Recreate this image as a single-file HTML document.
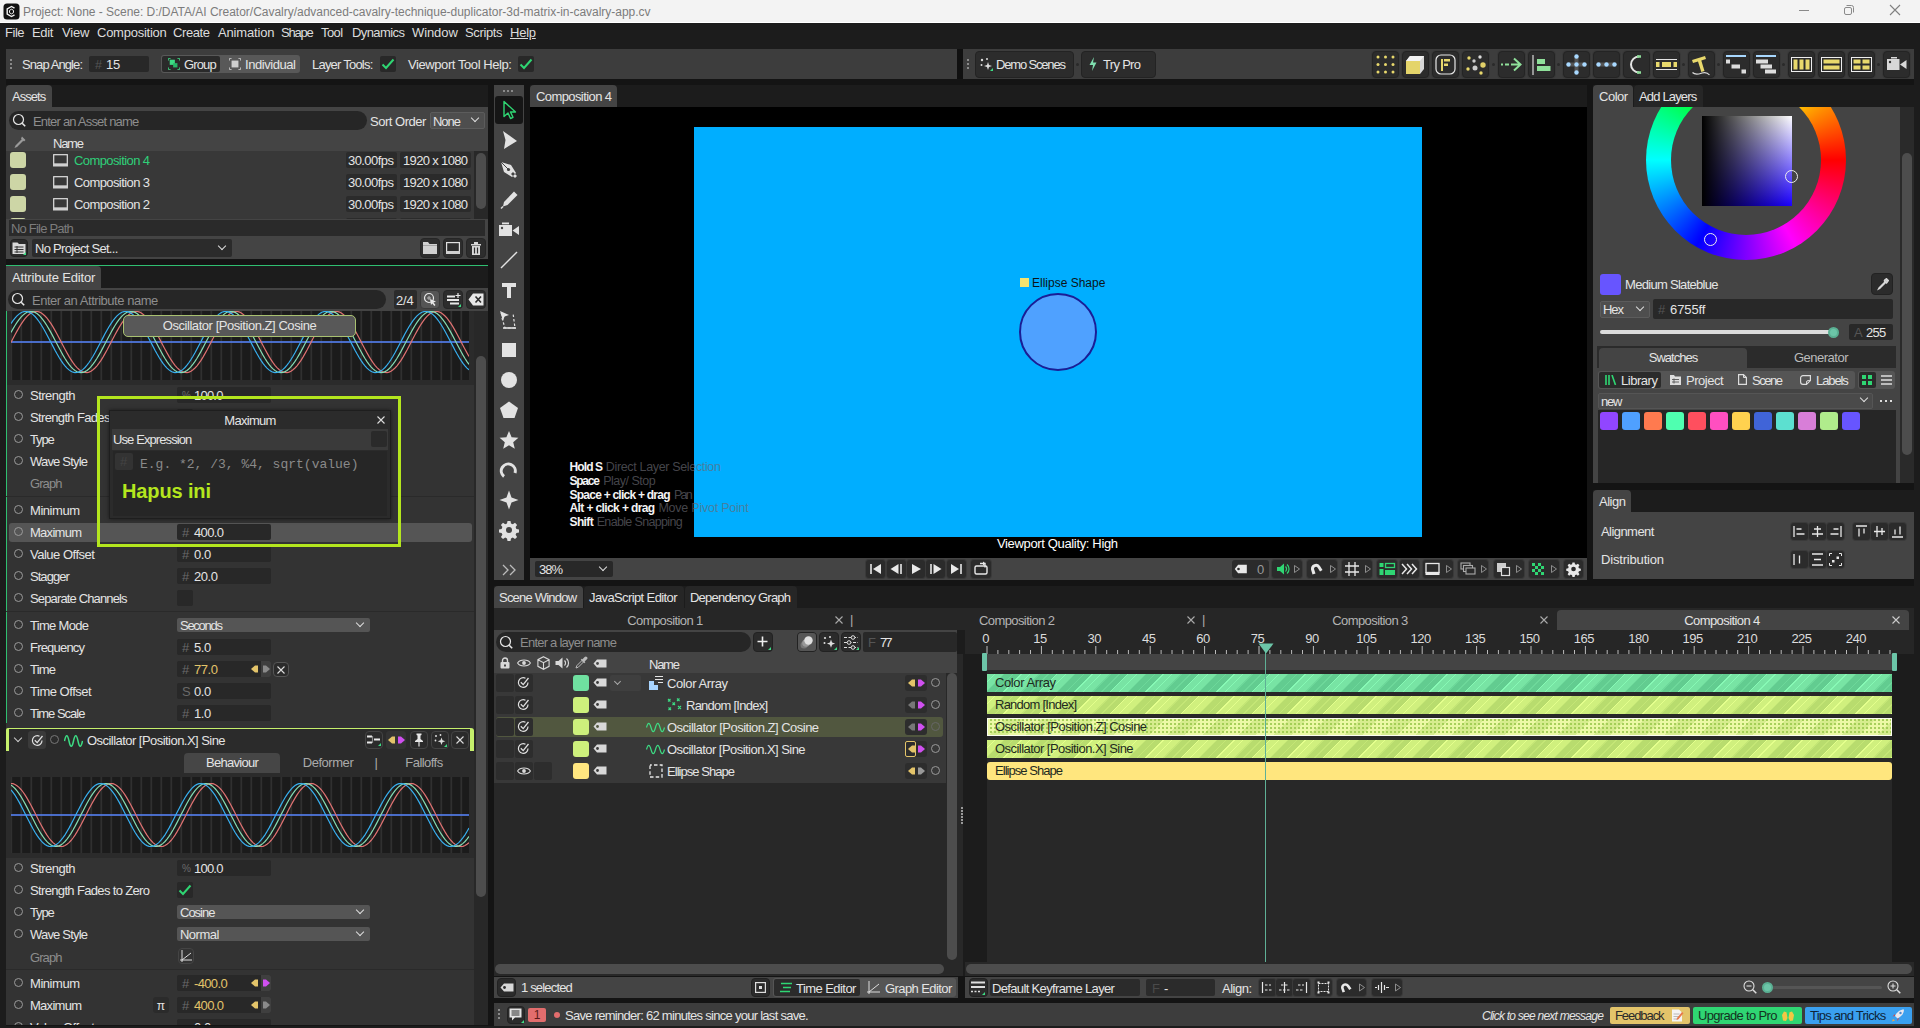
<!DOCTYPE html>
<html lang="en"><head><meta charset="utf-8"><title>Cavalry</title>
<style>
*{box-sizing:border-box}
html,body{margin:0;padding:0}
body{width:1920px;height:1028px;background:#1c1c1c;font-family:"Liberation Sans",sans-serif;font-size:12.5px;letter-spacing:-0.25px;color:#e4e4e4;overflow:hidden;position:relative}
.a{position:absolute}
.t{position:absolute;white-space:nowrap;line-height:18px;height:16px}
.dim{color:#8d8d8d}
.pn{position:absolute;background:#444}
.tab{position:absolute;height:22px;line-height:24px;background:#444;border-radius:4px 4px 0 0;padding:0 6px;white-space:nowrap}
.tab.off{background:#262626}
.inp{position:absolute;background:#282828;border-radius:2px}
.btn{position:absolute;background:#2c2c2c;border-radius:4px;border:1px solid #262626}
.ib{position:absolute;width:27px;height:27px;top:51px;background:#2c2c2c;border-radius:4px;border:1px solid #242424;box-shadow:0 0 0 1px #383838}
.ib svg{margin:-1px}
.ib svg{position:absolute;left:0;top:0}
.sep{position:absolute;top:63px;width:3px;height:3px;border-radius:2px;background:#2a2a2a}
.dd{position:absolute;background:#555;border-radius:2px;height:14px;line-height:14px;padding-left:3px}
.chev{position:absolute;width:6px;height:6px;border-right:1.3px solid #ddd;border-bottom:1.3px solid #ddd;transform:rotate(45deg)}
.ring{position:absolute;width:9px;height:9px;border:1.2px solid #9a9a9a;border-radius:50%}
.kfl{position:absolute;width:0;height:0;border-top:3.5px solid transparent;border-bottom:3.5px solid transparent;border-right:4px solid #e3c46a}
.kfl:after{content:"";position:absolute;left:4px;top:-3.5px;width:3px;height:7px;background:inherit}
.sw{position:absolute;width:16px;height:16px;border-radius:3px}
.sq{position:absolute;width:18px;height:18px;border-radius:3px;top:412px}
</style></head><body>
<div class="a" style="left:6px;top:79px;width:1908px;height:947px;background:#141414"></div>
<div class="a" style="left:6px;top:85px;width:482px;height:22px;background:#1c1c1c"></div><div class="a" style="left:6px;top:266px;width:482px;height:22px;background:#1c1c1c"></div><div class="a" style="left:530px;top:85px;width:1057px;height:22px;background:#1c1c1c"></div><div class="a" style="left:1593px;top:85px;width:321px;height:22px;background:#1c1c1c"></div><div class="a" style="left:1593px;top:490px;width:321px;height:22px;background:#1c1c1c"></div><div class="a" style="left:494px;top:586px;width:1420px;height:22px;background:#1c1c1c"></div>
<!-- title bar -->
<div class="a" style="left:0;top:0;width:1920px;height:24px;background:#111"></div><div class="a" style="left:0;top:0;width:1920px;height:23px;background:#fff"></div><div class="a" style="left:0;top:0;width:1920px;height:22px;background:#f3f3f3"></div>
<svg class="a" style="left:3px;top:3px" width="17" height="17" viewBox="0 0 17 17"><rect x="0.5" y="0.5" width="16" height="16" rx="3.5" fill="#111"/><path d="M11.5 5.2 8.5 3.5 4.2 6v5l4.3 2.5 3-1.7" fill="none" stroke="#f3f3f3" stroke-width="1.4"/><path d="M8.5 6.2 6.5 7.4v2.3l2 1.2 2-1.2V7.4z" fill="none" stroke="#f3f3f3" stroke-width="1"/></svg>
<div class="t" style="left:23px;top:3px;font-size:12px;letter-spacing:0;color:#7c7c7c;letter-spacing:-0.02px">Project: None - Scene: D:/DATA/AI Creator/Cavalry/advanced-cavalry-technique-duplicator-3d-matrix-in-cavalry-app.cv</div>
<svg class="a" style="left:1790px;top:0" width="130" height="23" viewBox="0 0 130 23"><path d="M9 10.5h10" stroke="#8a8a8a" stroke-width="1"/><rect x="54.500" y="7.500" width="7" height="7" rx="1.500" fill="none" stroke="#8a8a8a"/><path d="M56.500 5.500h5a2 2 0 0 1 2 2v5" fill="none" stroke="#8a8a8a"/><path d="M100 5l10 10M110 5l-10 10" stroke="#808080" stroke-width="1.100"/></svg>
<!-- menu -->
<div class="a" style="left:0;top:23px;width:1920px;height:20px;background:#1c1c1c;font-size:13px;letter-spacing:-0.45px;color:#dcdcdc">
<span class="t" style="left:5px;top:1px;letter-spacing:-0.46px">File</span><span class="t" style="left:32px;top:1px;letter-spacing:-0.35px">Edit</span><span class="t" style="left:62px;top:1px;letter-spacing:-0.21px">View</span><span class="t" style="left:97px;top:1px;letter-spacing:-0.25px">Composition</span><span class="t" style="left:173px;top:1px;letter-spacing:-0.40px">Create</span><span class="t" style="left:218px;top:1px;letter-spacing:-0.17px">Animation</span><span class="t" style="left:281px;top:1px;letter-spacing:-1.22px">Shape</span><span class="t" style="left:321px;top:1px;letter-spacing:-0.56px">Tool</span><span class="t" style="left:352px;top:1px;letter-spacing:-0.59px">Dynamics</span><span class="t" style="left:412px;top:1px;letter-spacing:-0.09px">Window</span><span class="t" style="left:465px;top:1px;letter-spacing:-0.37px">Scripts</span><span class="t" style="left:510px;top:1px;text-decoration:underline;letter-spacing:-0.24px">Help</span>
</div>
<!-- toolbar 1 -->
<div class="a" style="left:6px;top:49px;width:951px;height:30px;background:#3d3d3d"></div>
<div class="a" style="left:10px;top:59px;width:2px;height:2px;background:#8a8a8a;box-shadow:0 4px 0 #8a8a8a,0 8px 0 #8a8a8a"></div>
<div class="t" style="left:22px;top:56px;font-size:13px;letter-spacing:-0.4px;letter-spacing:-0.91px">Snap Angle:</div>
<div class="inp" style="left:89px;top:56px;width:60px;height:16px"></div>
<div class="t" style="left:95px;top:56px;color:#555">#</div><div class="t" style="left:106px;top:56px;font-size:13px">15</div>
<div class="a" style="left:161px;top:55px;width:139px;height:18px;background:#585858;border-radius:3px"></div>
<div class="a" style="left:162px;top:56px;width:58px;height:16px;background:#2a2a2a;border-radius:2px"></div>
<svg class="a" style="left:168px;top:58px" width="12" height="12" viewBox="0 0 14 14"><rect x="2" y="2" width="6" height="6" fill="#3ddc84"/><rect x="6" y="6" width="5" height="5" fill="#27b868"/><path d="M0.500 3V0.500H3M11 0.500h2.500V3M13.500 11v2.500H11M3 13.500H0.500V11" fill="none" stroke="#3ddc84"/></svg>
<div class="t" style="left:184px;top:56px;font-size:13px;letter-spacing:-0.4px;letter-spacing:-0.85px">Group</div>
<svg class="a" style="left:229px;top:58px" width="12" height="12" viewBox="0 0 14 14"><rect x="3" y="3" width="8" height="8" fill="#cfcfcf"/><path d="M0.500 3V0.500H3M11 0.500h2.500V3M13.500 11v2.500H11M3 13.500H0.500V11" fill="none" stroke="#cfcfcf"/></svg>
<div class="t" style="left:245px;top:56px;font-size:13px;letter-spacing:-0.4px;letter-spacing:-0.44px">Individual</div>
<div class="t" style="left:312px;top:56px;font-size:13px;letter-spacing:-0.4px;letter-spacing:-0.78px">Layer Tools:</div>
<div class="inp" style="left:380px;top:56px;width:16px;height:16px"></div>
<svg class="a" style="left:381px;top:57px" width="14" height="14" viewBox="0 0 14 14"><path d="M1.500 7.500 5 11 12.500 2.500" fill="none" stroke="#2fd673" stroke-width="2"/></svg>
<div class="t" style="left:408px;top:56px;font-size:13px;letter-spacing:-0.4px;letter-spacing:-0.42px">Viewport Tool Help:</div>
<div class="inp" style="left:518px;top:56px;width:16px;height:16px"></div>
<svg class="a" style="left:519px;top:57px" width="14" height="14" viewBox="0 0 14 14"><path d="M1.500 7.500 5 11 12.500 2.500" fill="none" stroke="#2fd673" stroke-width="2"/></svg>
<!-- toolbar 2 -->
<div class="a" style="left:957px;top:49px;width:6px;height:30px;background:#101010"></div>
<div class="a" style="left:963px;top:49px;width:951px;height:30px;background:#3d3d3d"></div>
<div class="a" style="left:967px;top:59px;width:2px;height:2px;background:#8a8a8a;box-shadow:0 4px 0 #8a8a8a,0 8px 0 #8a8a8a"></div>
<div class="btn" style="left:975px;top:51px;width:99px;height:27px;background:#2c2c2c;border-color:#232323"></div>
<svg class="a" style="left:979px;top:57px" width="15" height="15" viewBox="0 0 15 15"><path d="M9 5l1 3 3 1-3 1-1 3-1-3-3-1 3-1z" fill="#ddd"/><circle cx="3" cy="3" r="1.200" fill="#ddd"/><circle cx="8" cy="2" r="1" fill="#ddd"/><circle cx="2.500" cy="8" r="1" fill="#ddd"/><path d="M11 14l3-3v3z" fill="#3ddc84"/></svg>
<div class="t" style="left:996px;top:56px;font-size:13px;letter-spacing:-0.4px;letter-spacing:-1.17px">Demo Scenes</div>
<div class="a" style="left:1076px;top:63px;width:3px;height:3px;border-radius:2px;background:#2a2a2a"></div>
<div class="btn" style="left:1081px;top:51px;width:75px;height:27px;background:#2c2c2c;border-color:#232323"></div>
<svg class="a" style="left:1088px;top:56px" width="10" height="16" viewBox="0 0 10 16"><path d="M6 1 1.500 9H5l-1 6 4.500-8.500H5z" fill="#7fe0b0"/></svg>
<div class="t" style="left:1103px;top:56px;font-size:13px;letter-spacing:-0.4px;letter-spacing:-0.69px">Try Pro</div>
<!-- toolbar 2 icon buttons -->
<div class="ib" style="left:1372px"><svg width="27" height="27" viewBox="0 0 27 27" fill="#e8d86c"><circle cx="6" cy="6" r="1.500"/><circle cx="13.500" cy="6" r="1.500"/><circle cx="21" cy="6" r="1.500"/><circle cx="6" cy="13.500" r="1.500"/><circle cx="13.500" cy="13.500" r="1.500"/><circle cx="21" cy="13.500" r="1.500"/><circle cx="6" cy="21" r="1.500"/><circle cx="13.500" cy="21" r="1.500"/><circle cx="21" cy="21" r="1.500"/></svg></div>
<div class="ib" style="left:1402px"><svg width="27" height="27" viewBox="0 0 27 27"><path d="M4 10l4-5h14v13l-4 5z" fill="#d8d8d8"/><path d="M8 5h14l-4 5H4z" fill="#f2f2f2"/><rect x="4" y="10" width="14" height="13" fill="#e4d46a"/></svg></div>
<div class="ib" style="left:1432px"><svg width="27" height="27" viewBox="0 0 27 27"><rect x="4" y="4" width="19" height="19" rx="5" fill="none" stroke="#e8e8e8" stroke-width="1.200"/><path d="M9 8h2v12H9zM12 8h6v2.500h-6zM12 12.500h4v2.500h-4z" fill="#e8d86c"/></svg></div>
<div class="ib" style="left:1462px"><svg width="27" height="27" viewBox="0 0 27 27"><circle cx="7" cy="7" r="1.700" fill="#e8d86c"/><circle cx="18" cy="6" r="1.700" fill="#ddd"/><circle cx="12" cy="10" r="1.700" fill="#ccc"/><circle cx="21" cy="14" r="2.700" fill="#e0cf68"/><circle cx="13" cy="17" r="2.500" fill="#ccc"/><circle cx="6" cy="18" r="1.700" fill="#e8d86c"/><circle cx="19" cy="22" r="1.700" fill="#e8d86c"/></svg></div>
<div class="sep" style="left:1492px"></div>
<div class="ib" style="left:1498px"><svg width="27" height="27" viewBox="0 0 27 27"><path d="M3 13.500h2M7 13.500h4M13 13.500h9M16 7.500l6.500 6-6.500 6" fill="none" stroke="#8fe09a" stroke-width="2"/></svg></div>
<div class="ib" style="left:1528px"><svg width="27" height="27" viewBox="0 0 27 27"><path d="M5 4v20" stroke="#ddd" stroke-width="1.200"/><rect x="9" y="8" width="8" height="5" fill="#8fe09a"/><rect x="9" y="15" width="13.500" height="5" fill="#8fe09a"/></svg></div>
<div class="sep" style="left:1557px"></div>
<div class="ib" style="left:1563px"><svg width="27" height="27" viewBox="0 0 27 27"><path d="M13.500 6v15M6 13.500h15" stroke="#555" stroke-width="4"/><g fill="#a8d8ff"><circle cx="13.500" cy="5.500" r="2.200"/><circle cx="13.500" cy="13.500" r="2.200"/><circle cx="13.500" cy="21.500" r="2.200"/><circle cx="5.500" cy="13.500" r="2.200"/><circle cx="21.500" cy="13.500" r="2.200"/></g></svg></div>
<div class="ib" style="left:1593px"><svg width="27" height="27" viewBox="0 0 27 27"><path d="M6 13.500h15" stroke="#555" stroke-width="4"/><g fill="#a8d8ff"><circle cx="5.500" cy="13.500" r="2.200"/><circle cx="13.500" cy="13.500" r="2.200"/><circle cx="21.500" cy="13.500" r="2.200"/></g></svg></div>
<div class="ib" style="left:1623px"><svg width="27" height="27" viewBox="0 0 27 27"><path d="M16 5.500a8 8 0 1 0 0 16" fill="none" stroke="#e4e4e4" stroke-width="2"/><path d="M14 5.500h4M14 21.500h4" stroke="#8fe09a" stroke-width="2.500"/></svg></div>
<div class="ib" style="left:1653px"><svg width="27" height="27" viewBox="0 0 27 27"><path d="M3 8.500h21M3 18.500h21" stroke="#e4e4e4" stroke-width="1"/><rect x="3" y="11" width="3.500" height="5" fill="#e8d86c"/><rect x="9" y="11" width="9" height="5" fill="#e8d86c"/><rect x="20.500" y="11" width="3.500" height="5" fill="#e8d86c"/></svg></div>
<div class="sep" style="left:1682px"></div>
<div class="ib" style="left:1688px"><svg width="27" height="27" viewBox="0 0 27 27"><path d="M4 9 17 5l1 3-4.700 1.400 3.200 10.500-3.200 1L10 10.500 5 12z" fill="#e8d86c"/><path d="M4.500 21.500c3 3 6.500 1.500 9.500 .5s5.500-.5 7.500 2" fill="none" stroke="#ddd" stroke-width="1.200"/></svg></div>
<div class="sep" style="left:1717px"></div>
<div class="ib" style="left:1723px"><svg width="27" height="27" viewBox="0 0 27 27"><rect x="3" y="4" width="20" height="2" fill="#a8d8ff"/><rect x="3" y="8.500" width="4" height="4" fill="#ddd"/><rect x="8.500" y="13.500" width="8.500" height="4" fill="#ddd"/><rect x="18.500" y="18.500" width="4.500" height="4" fill="#ddd"/></svg></div>
<div class="ib" style="left:1753px"><svg width="27" height="27" viewBox="0 0 27 27"><rect x="3" y="4" width="20" height="2" fill="#a8d8ff"/><rect x="3" y="8.500" width="12" height="4" fill="#ddd"/><rect x="7.500" y="13.500" width="11.500" height="4" fill="#ddd"/><rect x="12" y="18.500" width="11" height="4" fill="#ddd"/></svg></div>
<div class="sep" style="left:1782px"></div>
<div class="ib" style="left:1788px"><svg width="27" height="27" viewBox="0 0 27 27"><rect x="3.500" y="6.500" width="20" height="14" fill="none" stroke="#eee" stroke-width="1"/><rect x="5.500" y="8.500" width="4" height="10" fill="#e8d86c"/><rect x="11.500" y="8.500" width="4" height="10" fill="#e8d86c"/><rect x="17.500" y="8.500" width="4" height="10" fill="#e8d86c"/></svg></div>
<div class="ib" style="left:1818px"><svg width="27" height="27" viewBox="0 0 27 27"><rect x="3.500" y="6.500" width="20" height="14" fill="none" stroke="#eee" stroke-width="1"/><rect x="5.500" y="8.500" width="16" height="4" fill="#e8d86c"/><rect x="5.500" y="14.500" width="16" height="4" fill="#e8d86c"/></svg></div>
<div class="ib" style="left:1848px"><svg width="27" height="27" viewBox="0 0 27 27"><rect x="3.500" y="6.500" width="20" height="14" fill="none" stroke="#eee" stroke-width="1"/><rect x="5.500" y="8.500" width="7" height="4" fill="#e8d86c"/><rect x="14.500" y="8.500" width="7" height="4" fill="#e8d86c"/><rect x="5.500" y="14.500" width="7" height="4" fill="#e8d86c"/><rect x="14.500" y="14.500" width="7" height="4" fill="#e8d86c"/></svg></div>
<div class="sep" style="left:1877px"></div>
<div class="ib" style="left:1883px"><svg width="27" height="27" viewBox="0 0 27 27"><path d="M4 8h12.500v11H4zM17 13.500l6.500-4.500v9z" fill="#d8d8d8"/><rect x="8" y="6" width="6" height="1.500" fill="#d8d8d8"/><circle cx="7" cy="11" r="1.200" fill="#333"/></svg></div>
<!-- ASSETS -->
<div class="tab" style="left:6px;top:85px;width:46px;font-size:13px;letter-spacing:-0.45px;letter-spacing:-0.95px">Assets</div>
<div class="pn" style="left:6px;top:107px;width:482px;height:152px"></div>
<div class="a" style="left:9px;top:111px;width:358px;height:19px;background:#262626;border-radius:10px"></div>
<svg class="a" style="left:12px;top:113px" width="15" height="15" viewBox="0 0 15 15"><circle cx="6.500" cy="6.500" r="5" fill="none" stroke="#e8e8e8" stroke-width="1.200"/><path d="M10.200 10.200l3 3" stroke="#e8e8e8" stroke-width="1.600"/></svg>
<div class="t dim" style="left:33px;top:113px;font-size:13px;letter-spacing:-0.45px;letter-spacing:-0.80px">Enter an Asset name</div>
<div class="t" style="left:370px;top:113px;font-size:13px;letter-spacing:-0.45px;letter-spacing:-0.49px">Sort Order</div>
<div class="a" style="left:430px;top:112px;width:55px;height:17px;background:#4e4e4e;border:1px solid #5c5c5c;border-radius:2px"></div>
<div class="t" style="left:433px;top:113px;font-size:13px;letter-spacing:-0.45px;letter-spacing:-1.03px">None</div>
<div class="chev" style="left:472px;top:115px;width:6px;height:6px"></div>
<svg class="a" style="left:13px;top:135px" width="14" height="14" viewBox="0 0 14 14"><path d="M9 1.500l3.500 3.500-1.500 1.500-.7-.7L4 12l-2.500 1 1-2.500L8.700 4.200 8 3.500z" fill="#9a9a9a"/></svg>
<div class="t" style="left:53px;top:135px;font-size:13px;letter-spacing:-0.45px;letter-spacing:-1.26px">Name</div>
<div class="a" style="left:474px;top:151px;width:14px;height:68px;background:#282828"></div><div class="a" style="left:6px;top:151px;width:468px;height:68px;background:#383838;overflow:hidden">
<div class="sw" style="left:4px;top:1px;background:#cdd6a6"></div>
<div class="inp" style="left:340px;top:1px;width:51px;height:16px;background:#2b2b2b"></div>
<div class="inp" style="left:394px;top:1px;width:71px;height:16px;background:#2b2b2b"></div>
<svg class="a" style="left:47px;top:3px" width="15" height="13" viewBox="0 0 15 13"><rect x="0.700" y="0.700" width="13.600" height="9.600" fill="none" stroke="#e0e0e0" stroke-width="1.200"/><rect x="0" y="9.500" width="15" height="3" fill="#d0d0d0"/></svg>
<div class="t" style="left:68px;top:1px;color:#2fcf78;font-size:13px;letter-spacing:-0.45px;letter-spacing:-0.59px">Composition 4</div>
<div class="t" style="left:342px;top:1px;font-size:13px;letter-spacing:-0.45px;letter-spacing:-0.57px">30.00fps</div>
<div class="t" style="left:397px;top:1px;font-size:13px;letter-spacing:-0.45px;letter-spacing:-0.65px">1920 x 1080</div>
<div class="sw" style="left:4px;top:23px;background:#cdd6a6"></div>
<div class="inp" style="left:340px;top:23px;width:51px;height:16px;background:#2b2b2b"></div>
<div class="inp" style="left:394px;top:23px;width:71px;height:16px;background:#2b2b2b"></div>
<svg class="a" style="left:47px;top:25px" width="15" height="13" viewBox="0 0 15 13"><rect x="0.700" y="0.700" width="13.600" height="9.600" fill="none" stroke="#e0e0e0" stroke-width="1.200"/><rect x="0" y="9.500" width="15" height="3" fill="#d0d0d0"/></svg>
<div class="t" style="left:68px;top:23px;color:#e4e4e4;font-size:13px;letter-spacing:-0.45px;letter-spacing:-0.59px">Composition 3</div>
<div class="t" style="left:342px;top:23px;font-size:13px;letter-spacing:-0.45px;letter-spacing:-0.57px">30.00fps</div>
<div class="t" style="left:397px;top:23px;font-size:13px;letter-spacing:-0.45px;letter-spacing:-0.65px">1920 x 1080</div>
<div class="sw" style="left:4px;top:45px;background:#cdd6a6"></div>
<div class="inp" style="left:340px;top:45px;width:51px;height:16px;background:#2b2b2b"></div>
<div class="inp" style="left:394px;top:45px;width:71px;height:16px;background:#2b2b2b"></div>
<svg class="a" style="left:47px;top:47px" width="15" height="13" viewBox="0 0 15 13"><rect x="0.700" y="0.700" width="13.600" height="9.600" fill="none" stroke="#e0e0e0" stroke-width="1.200"/><rect x="0" y="9.500" width="15" height="3" fill="#d0d0d0"/></svg>
<div class="t" style="left:68px;top:45px;color:#e4e4e4;font-size:13px;letter-spacing:-0.45px;letter-spacing:-0.59px">Composition 2</div>
<div class="t" style="left:342px;top:45px;font-size:13px;letter-spacing:-0.45px;letter-spacing:-0.57px">30.00fps</div>
<div class="t" style="left:397px;top:45px;font-size:13px;letter-spacing:-0.45px;letter-spacing:-0.65px">1920 x 1080</div>
<div class="sw" style="left:4px;top:67px;background:#cdd6a6"></div>
<div class="inp" style="left:340px;top:67px;width:51px;height:16px;background:#2b2b2b"></div>
<div class="inp" style="left:394px;top:67px;width:71px;height:16px;background:#2b2b2b"></div>
</div>
<div class="a" style="left:476px;top:153px;width:10px;height:56px;background:#4d4d4d;border-radius:5px"></div>
<div class="a" style="left:9px;top:220px;width:476px;height:16px;background:#2a2a2a"></div>
<div class="t" style="left:11px;top:220px;color:#7c7c7c;font-size:13px;letter-spacing:-0.45px;letter-spacing:-0.79px">No File Path</div>
<div class="btn" style="left:10px;top:239px;width:18px;height:18px;background:#2b2b2b;border-color:#222"></div>
<svg class="a" style="left:12px;top:241px" width="14" height="14" viewBox="0 0 14 14"><path d="M0.500 1.500h5l1.500 1.500h6.500v10H0.500z" fill="#d8d8d8"/><path d="M2.500 6h9M2.500 8.500h9M2.500 11h9M5 5v7" stroke="#333" stroke-width="1"/><path d="M11 14l3-3v3z" fill="#3ddc84"/></svg>
<div class="a" style="left:32px;top:239px;width:200px;height:18px;background:#2b2b2b;border-radius:2px"></div>
<div class="t" style="left:35px;top:240px;font-size:13px;letter-spacing:-0.45px;letter-spacing:-0.71px">No Project Set...</div>
<div class="chev" style="left:219px;top:243px"></div>
<div class="btn" style="left:420px;top:238px;width:20px;height:20px;background:#2d2d2d;border-color:#262626"></div>
<div class="btn" style="left:443px;top:238px;width:20px;height:20px;background:#2d2d2d;border-color:#262626"></div>
<div class="btn" style="left:466px;top:238px;width:20px;height:20px;background:#2d2d2d;border-color:#262626"></div>
<svg class="a" style="left:423px;top:242px" width="14" height="12" viewBox="0 0 14 12"><path d="M0 0h5l1.500 2H14v10H0z" fill="#d0d0d0"/><path d="M0 3.500h14" stroke="#888" stroke-width=".6"/></svg>
<svg class="a" style="left:446px;top:242px" width="14" height="12" viewBox="0 0 14 12"><rect x="0.600" y="0.600" width="12.800" height="9" fill="none" stroke="#e0e0e0" stroke-width="1.200"/><rect x="0" y="9" width="14" height="3" fill="#d0d0d0"/></svg>
<svg class="a" style="left:470px;top:241px" width="12" height="14" viewBox="0 0 12 14"><path d="M1 3h10v1.500H1zM4 1h4v2H4zM2 5h8v9H2z" fill="#d8d8d8"/><path d="M4.500 6.500v6M7.500 6.500v6" stroke="#2d2d2d" stroke-width="1.200"/></svg>
<!-- ATTRIBUTE EDITOR -->
<div class="a" style="left:6px;top:264.500px;width:482px;height:1.300px;background:#2fbf71"></div>
<div class="tab" style="left:6px;top:266px;width:95px;height:22px;border-radius:0 4px 0 0;font-size:13px;letter-spacing:-0.45px;letter-spacing:-0.18px">Attribute Editor</div>
<div class="pn" style="left:6px;top:288px;width:482px;height:23px"></div>
<div class="a" style="left:8px;top:290px;width:378px;height:19px;background:#262626;border-radius:10px"></div>
<svg class="a" style="left:11px;top:292px" width="15" height="15" viewBox="0 0 15 15"><circle cx="6.500" cy="6.500" r="5" fill="none" stroke="#e8e8e8" stroke-width="1.200"/><path d="M10.200 10.200l3 3" stroke="#e8e8e8" stroke-width="1.600"/></svg>
<div class="t dim" style="left:32px;top:292px;font-size:13px;letter-spacing:-0.45px;letter-spacing:-0.47px">Enter an Attribute name</div>
<div class="inp" style="left:394px;top:290px;width:23px;height:19px;background:#2b2b2b"></div>
<div class="t" style="left:396px;top:292px;font-size:13px;letter-spacing:-0.45px;letter-spacing:-0.19px">2/4</div>
<div class="btn" style="left:420px;top:290px;width:20px;height:19px;background:#555;border-color:#3a3a3a"></div>
<div class="btn" style="left:443px;top:290px;width:20px;height:19px;background:#2d2d2d;border-color:#262626"></div>
<div class="btn" style="left:466px;top:290px;width:20px;height:19px;background:#2d2d2d;border-color:#262626"></div>
<svg class="a" style="left:423px;top:292px" width="15" height="15" viewBox="0 0 15 15"><circle cx="6" cy="6" r="4.500" fill="none" stroke="#e8e8e8" stroke-width="1.200"/><path d="M4 6h4M6 4v4" stroke="#bbb" stroke-width="1"/><path d="M7 7l6 2.500-2.500 1 2 2.500-1.200 1-2-2.500L8 13z" fill="#e8e8e8"/></svg>
<svg class="a" style="left:446px;top:292px" width="15" height="15" viewBox="0 0 15 15"><path d="M1 4.500h8M1 8h12M4 11.500h9" stroke="#e8e8e8" stroke-width="1.800"/><path d="M12 1v5M9.500 3.500h5" stroke="#e8e8e8" stroke-width="1.200"/><path d="M12 15l3-3v3z" fill="#3ddc84"/></svg>
<svg class="a" style="left:468px;top:293px" width="16" height="13" viewBox="0 0 16 13"><path d="M5 0.500h10.500v12H5L0.500 6.500z" fill="#e8e8e8"/><path d="M7.500 3.500l5.500 6M13 3.500l-5.500 6" stroke="#2d2d2d" stroke-width="1.600"/></svg>
<div class="a" style="left:6px;top:311px;width:468px;height:714px;background:#333"></div>
<div class="a" style="left:6px;top:311px;width:468px;height:74px;background:#2b2b2b"></div>
<div class="a" style="left:6px;top:773px;width:468px;height:85px;background:#2b2b2b"></div>
<div class="a" style="left:474px;top:311px;width:14px;height:714px;background:#282828"></div>
<div class="a" style="left:476px;top:356px;width:10px;height:541px;background:#4d4d4d;border-radius:5px"></div>
<div class="a" style="left:6px;top:311px;width:1.400px;height:412px;background:#2fbf71"></div>
<svg class="a" style="left:11px;top:311px" width="458" height="69" viewBox="0 0 458 69"><rect width="458" height="69" fill="#1b1b1b"/><path d="M0.3 0v69M10.3 0v69M20.3 0v69M30.3 0v69M40.3 0v69M50.3 0v69M60.3 0v69M70.3 0v69M80.3 0v69M90.3 0v69M100.3 0v69M110.3 0v69M120.3 0v69M130.3 0v69M140.3 0v69M150.3 0v69M160.3 0v69M170.3 0v69M180.3 0v69M190.3 0v69M200.3 0v69M210.3 0v69M220.3 0v69M230.3 0v69M240.3 0v69M250.3 0v69M260.3 0v69M270.3 0v69M280.3 0v69M290.3 0v69M300.3 0v69M310.3 0v69M320.3 0v69M330.3 0v69M340.3 0v69M350.3 0v69M360.3 0v69M370.3 0v69M380.3 0v69M390.3 0v69M400.3 0v69M410.3 0v69M420.3 0v69M430.3 0v69M440.3 0v69M450.3 0v69" stroke="#303030" stroke-width="1.800"/><path d="M0 31.0h458" stroke="#5078e0" stroke-opacity=".88" stroke-width="1.800"/><path d="M0.0 31.4 L2.0 27.5 L4.0 23.8 L6.0 20.1 L8.0 16.6 L10.0 13.3 L12.0 10.3 L14.0 7.7 L16.0 5.4 L18.0 3.5 L20.0 2.0 L22.0 1.0 L24.0 0.5 L26.0 0.4 L28.0 0.9 L30.0 1.8 L32.0 3.2 L34.0 5.0 L36.0 7.2 L38.0 9.8 L40.0 12.7 L42.0 15.9 L44.0 19.4 L46.0 23.0 L48.0 26.8 L50.0 30.6 L52.0 34.5 L54.0 38.2 L56.0 41.9 L58.0 45.4 L60.0 48.7 L62.0 51.7 L64.0 54.3 L66.0 56.6 L68.0 58.5 L70.0 60.0 L72.0 61.0 L74.0 61.5 L76.0 61.6 L78.0 61.1 L80.0 60.2 L82.0 58.8 L84.0 57.0 L86.0 54.8 L88.0 52.2 L90.0 49.3 L92.0 46.1 L94.0 42.6 L96.0 39.0 L98.0 35.2 L100.0 31.4 L102.0 27.5 L104.0 23.8 L106.0 20.1 L108.0 16.6 L110.0 13.3 L112.0 10.3 L114.0 7.7 L116.0 5.4 L118.0 3.5 L120.0 2.0 L122.0 1.0 L124.0 0.5 L126.0 0.4 L128.0 0.9 L130.0 1.8 L132.0 3.2 L134.0 5.0 L136.0 7.2 L138.0 9.8 L140.0 12.7 L142.0 15.9 L144.0 19.4 L146.0 23.0 L148.0 26.8 L150.0 30.6 L152.0 34.5 L154.0 38.2 L156.0 41.9 L158.0 45.4 L160.0 48.7 L162.0 51.7 L164.0 54.3 L166.0 56.6 L168.0 58.5 L170.0 60.0 L172.0 61.0 L174.0 61.5 L176.0 61.6 L178.0 61.1 L180.0 60.2 L182.0 58.8 L184.0 57.0 L186.0 54.8 L188.0 52.2 L190.0 49.3 L192.0 46.1 L194.0 42.6 L196.0 39.0 L198.0 35.2 L200.0 31.4 L202.0 27.5 L204.0 23.8 L206.0 20.1 L208.0 16.6 L210.0 13.3 L212.0 10.3 L214.0 7.7 L216.0 5.4 L218.0 3.5 L220.0 2.0 L222.0 1.0 L224.0 0.5 L226.0 0.4 L228.0 0.9 L230.0 1.8 L232.0 3.2 L234.0 5.0 L236.0 7.2 L238.0 9.8 L240.0 12.7 L242.0 15.9 L244.0 19.4 L246.0 23.0 L248.0 26.8 L250.0 30.6 L252.0 34.5 L254.0 38.2 L256.0 41.9 L258.0 45.4 L260.0 48.7 L262.0 51.7 L264.0 54.3 L266.0 56.6 L268.0 58.5 L270.0 60.0 L272.0 61.0 L274.0 61.5 L276.0 61.6 L278.0 61.1 L280.0 60.2 L282.0 58.8 L284.0 57.0 L286.0 54.8 L288.0 52.2 L290.0 49.3 L292.0 46.1 L294.0 42.6 L296.0 39.0 L298.0 35.2 L300.0 31.4 L302.0 27.5 L304.0 23.8 L306.0 20.1 L308.0 16.6 L310.0 13.3 L312.0 10.3 L314.0 7.7 L316.0 5.4 L318.0 3.5 L320.0 2.0 L322.0 1.0 L324.0 0.5 L326.0 0.4 L328.0 0.9 L330.0 1.8 L332.0 3.2 L334.0 5.0 L336.0 7.2 L338.0 9.8 L340.0 12.7 L342.0 15.9 L344.0 19.4 L346.0 23.0 L348.0 26.8 L350.0 30.6 L352.0 34.5 L354.0 38.2 L356.0 41.9 L358.0 45.4 L360.0 48.7 L362.0 51.7 L364.0 54.3 L366.0 56.6 L368.0 58.5 L370.0 60.0 L372.0 61.0 L374.0 61.5 L376.0 61.6 L378.0 61.1 L380.0 60.2 L382.0 58.8 L384.0 57.0 L386.0 54.8 L388.0 52.2 L390.0 49.3 L392.0 46.1 L394.0 42.6 L396.0 39.0 L398.0 35.2 L400.0 31.4 L402.0 27.5 L404.0 23.8 L406.0 20.1 L408.0 16.6 L410.0 13.3 L412.0 10.3 L414.0 7.7 L416.0 5.4 L418.0 3.5 L420.0 2.0 L422.0 1.0 L424.0 0.5 L426.0 0.4 L428.0 0.9 L430.0 1.8 L432.0 3.2 L434.0 5.0 L436.0 7.2 L438.0 9.8 L440.0 12.7 L442.0 15.9 L444.0 19.4 L446.0 23.0 L448.0 26.8 L450.0 30.6 L452.0 34.5 L454.0 38.2 L456.0 41.9 L458.0 45.4" fill="none" stroke="#e07272" stroke-width="1.200"/><path d="M0.0 21.5 L2.0 17.9 L4.0 14.5 L6.0 11.4 L8.0 8.6 L10.0 6.2 L12.0 4.1 L14.0 2.5 L16.0 1.3 L18.0 0.6 L20.0 0.4 L22.0 0.7 L24.0 1.4 L26.0 2.6 L28.0 4.2 L30.0 6.3 L32.0 8.8 L34.0 11.6 L36.0 14.7 L38.0 18.1 L40.0 21.6 L42.0 25.4 L44.0 29.2 L46.0 33.0 L48.0 36.8 L50.0 40.5 L52.0 44.1 L54.0 47.5 L56.0 50.6 L58.0 53.4 L60.0 55.8 L62.0 57.9 L64.0 59.5 L66.0 60.7 L68.0 61.4 L70.0 61.6 L72.0 61.3 L74.0 60.6 L76.0 59.4 L78.0 57.8 L80.0 55.7 L82.0 53.2 L84.0 50.4 L86.0 47.3 L88.0 43.9 L90.0 40.4 L92.0 36.6 L94.0 32.8 L96.0 29.0 L98.0 25.2 L100.0 21.5 L102.0 17.9 L104.0 14.5 L106.0 11.4 L108.0 8.6 L110.0 6.2 L112.0 4.1 L114.0 2.5 L116.0 1.3 L118.0 0.6 L120.0 0.4 L122.0 0.7 L124.0 1.4 L126.0 2.6 L128.0 4.2 L130.0 6.3 L132.0 8.8 L134.0 11.6 L136.0 14.7 L138.0 18.1 L140.0 21.6 L142.0 25.4 L144.0 29.2 L146.0 33.0 L148.0 36.8 L150.0 40.5 L152.0 44.1 L154.0 47.5 L156.0 50.6 L158.0 53.4 L160.0 55.8 L162.0 57.9 L164.0 59.5 L166.0 60.7 L168.0 61.4 L170.0 61.6 L172.0 61.3 L174.0 60.6 L176.0 59.4 L178.0 57.8 L180.0 55.7 L182.0 53.2 L184.0 50.4 L186.0 47.3 L188.0 43.9 L190.0 40.4 L192.0 36.6 L194.0 32.8 L196.0 29.0 L198.0 25.2 L200.0 21.5 L202.0 17.9 L204.0 14.5 L206.0 11.4 L208.0 8.6 L210.0 6.2 L212.0 4.1 L214.0 2.5 L216.0 1.3 L218.0 0.6 L220.0 0.4 L222.0 0.7 L224.0 1.4 L226.0 2.6 L228.0 4.2 L230.0 6.3 L232.0 8.8 L234.0 11.6 L236.0 14.7 L238.0 18.1 L240.0 21.6 L242.0 25.4 L244.0 29.2 L246.0 33.0 L248.0 36.8 L250.0 40.5 L252.0 44.1 L254.0 47.5 L256.0 50.6 L258.0 53.4 L260.0 55.8 L262.0 57.9 L264.0 59.5 L266.0 60.7 L268.0 61.4 L270.0 61.6 L272.0 61.3 L274.0 60.6 L276.0 59.4 L278.0 57.8 L280.0 55.7 L282.0 53.2 L284.0 50.4 L286.0 47.3 L288.0 43.9 L290.0 40.4 L292.0 36.6 L294.0 32.8 L296.0 29.0 L298.0 25.2 L300.0 21.5 L302.0 17.9 L304.0 14.5 L306.0 11.4 L308.0 8.6 L310.0 6.2 L312.0 4.1 L314.0 2.5 L316.0 1.3 L318.0 0.6 L320.0 0.4 L322.0 0.7 L324.0 1.4 L326.0 2.6 L328.0 4.2 L330.0 6.3 L332.0 8.8 L334.0 11.6 L336.0 14.7 L338.0 18.1 L340.0 21.6 L342.0 25.4 L344.0 29.2 L346.0 33.0 L348.0 36.8 L350.0 40.5 L352.0 44.1 L354.0 47.5 L356.0 50.6 L358.0 53.4 L360.0 55.8 L362.0 57.9 L364.0 59.5 L366.0 60.7 L368.0 61.4 L370.0 61.6 L372.0 61.3 L374.0 60.6 L376.0 59.4 L378.0 57.8 L380.0 55.7 L382.0 53.2 L384.0 50.4 L386.0 47.3 L388.0 43.9 L390.0 40.4 L392.0 36.6 L394.0 32.8 L396.0 29.0 L398.0 25.2 L400.0 21.5 L402.0 17.9 L404.0 14.5 L406.0 11.4 L408.0 8.6 L410.0 6.2 L412.0 4.1 L414.0 2.5 L416.0 1.3 L418.0 0.6 L420.0 0.4 L422.0 0.7 L424.0 1.4 L426.0 2.6 L428.0 4.2 L430.0 6.3 L432.0 8.8 L434.0 11.6 L436.0 14.7 L438.0 18.1 L440.0 21.6 L442.0 25.4 L444.0 29.2 L446.0 33.0 L448.0 36.8 L450.0 40.5 L452.0 44.1 L454.0 47.5 L456.0 50.6 L458.0 53.4" fill="none" stroke="#84dcb4" stroke-width="1.200"/><path d="M0.0 12.6 L2.0 9.6 L4.0 7.1 L6.0 4.9 L8.0 3.1 L10.0 1.7 L12.0 0.8 L14.0 0.4 L16.0 0.5 L18.0 1.1 L20.0 2.1 L22.0 3.6 L24.0 5.5 L26.0 7.8 L28.0 10.5 L30.0 13.5 L32.0 16.8 L34.0 20.3 L36.0 24.0 L38.0 27.7 L40.0 31.6 L42.0 35.4 L44.0 39.2 L46.0 42.8 L48.0 46.2 L50.0 49.4 L52.0 52.4 L54.0 54.9 L56.0 57.1 L58.0 58.9 L60.0 60.3 L62.0 61.2 L64.0 61.6 L66.0 61.5 L68.0 60.9 L70.0 59.9 L72.0 58.4 L74.0 56.5 L76.0 54.2 L78.0 51.5 L80.0 48.5 L82.0 45.2 L84.0 41.7 L86.0 38.0 L88.0 34.3 L90.0 30.4 L92.0 26.6 L94.0 22.8 L96.0 19.2 L98.0 15.8 L100.0 12.6 L102.0 9.6 L104.0 7.1 L106.0 4.9 L108.0 3.1 L110.0 1.7 L112.0 0.8 L114.0 0.4 L116.0 0.5 L118.0 1.1 L120.0 2.1 L122.0 3.6 L124.0 5.5 L126.0 7.8 L128.0 10.5 L130.0 13.5 L132.0 16.8 L134.0 20.3 L136.0 24.0 L138.0 27.7 L140.0 31.6 L142.0 35.4 L144.0 39.2 L146.0 42.8 L148.0 46.2 L150.0 49.4 L152.0 52.4 L154.0 54.9 L156.0 57.1 L158.0 58.9 L160.0 60.3 L162.0 61.2 L164.0 61.6 L166.0 61.5 L168.0 60.9 L170.0 59.9 L172.0 58.4 L174.0 56.5 L176.0 54.2 L178.0 51.5 L180.0 48.5 L182.0 45.2 L184.0 41.7 L186.0 38.0 L188.0 34.3 L190.0 30.4 L192.0 26.6 L194.0 22.8 L196.0 19.2 L198.0 15.8 L200.0 12.6 L202.0 9.6 L204.0 7.1 L206.0 4.9 L208.0 3.1 L210.0 1.7 L212.0 0.8 L214.0 0.4 L216.0 0.5 L218.0 1.1 L220.0 2.1 L222.0 3.6 L224.0 5.5 L226.0 7.8 L228.0 10.5 L230.0 13.5 L232.0 16.8 L234.0 20.3 L236.0 24.0 L238.0 27.7 L240.0 31.6 L242.0 35.4 L244.0 39.2 L246.0 42.8 L248.0 46.2 L250.0 49.4 L252.0 52.4 L254.0 54.9 L256.0 57.1 L258.0 58.9 L260.0 60.3 L262.0 61.2 L264.0 61.6 L266.0 61.5 L268.0 60.9 L270.0 59.9 L272.0 58.4 L274.0 56.5 L276.0 54.2 L278.0 51.5 L280.0 48.5 L282.0 45.2 L284.0 41.7 L286.0 38.0 L288.0 34.3 L290.0 30.4 L292.0 26.6 L294.0 22.8 L296.0 19.2 L298.0 15.8 L300.0 12.6 L302.0 9.6 L304.0 7.1 L306.0 4.9 L308.0 3.1 L310.0 1.7 L312.0 0.8 L314.0 0.4 L316.0 0.5 L318.0 1.1 L320.0 2.1 L322.0 3.6 L324.0 5.5 L326.0 7.8 L328.0 10.5 L330.0 13.5 L332.0 16.8 L334.0 20.3 L336.0 24.0 L338.0 27.7 L340.0 31.6 L342.0 35.4 L344.0 39.2 L346.0 42.8 L348.0 46.2 L350.0 49.4 L352.0 52.4 L354.0 54.9 L356.0 57.1 L358.0 58.9 L360.0 60.3 L362.0 61.2 L364.0 61.6 L366.0 61.5 L368.0 60.9 L370.0 59.9 L372.0 58.4 L374.0 56.5 L376.0 54.2 L378.0 51.5 L380.0 48.5 L382.0 45.2 L384.0 41.7 L386.0 38.0 L388.0 34.3 L390.0 30.4 L392.0 26.6 L394.0 22.8 L396.0 19.2 L398.0 15.8 L400.0 12.6 L402.0 9.6 L404.0 7.1 L406.0 4.9 L408.0 3.1 L410.0 1.7 L412.0 0.8 L414.0 0.4 L416.0 0.5 L418.0 1.1 L420.0 2.1 L422.0 3.6 L424.0 5.5 L426.0 7.8 L428.0 10.5 L430.0 13.5 L432.0 16.8 L434.0 20.3 L436.0 24.0 L438.0 27.7 L440.0 31.6 L442.0 35.4 L444.0 39.2 L446.0 42.8 L448.0 46.2 L450.0 49.4 L452.0 52.4 L454.0 54.9 L456.0 57.1 L458.0 58.9" fill="none" stroke="#38b0f0" stroke-width="1.200"/></svg>
<svg class="a" style="left:11px;top:777px" width="458" height="76" viewBox="0 0 458 76"><rect width="458" height="76" fill="#1b1b1b"/><path d="M0.3 0v76M10.3 0v76M20.3 0v76M30.3 0v76M40.3 0v76M50.3 0v76M60.3 0v76M70.3 0v76M80.3 0v76M90.3 0v76M100.3 0v76M110.3 0v76M120.3 0v76M130.3 0v76M140.3 0v76M150.3 0v76M160.3 0v76M170.3 0v76M180.3 0v76M190.3 0v76M200.3 0v76M210.3 0v76M220.3 0v76M230.3 0v76M240.3 0v76M250.3 0v76M260.3 0v76M270.3 0v76M280.3 0v76M290.3 0v76M300.3 0v76M310.3 0v76M320.3 0v76M330.3 0v76M340.3 0v76M350.3 0v76M360.3 0v76M370.3 0v76M380.3 0v76M390.3 0v76M400.3 0v76M410.3 0v76M420.3 0v76M430.3 0v76M440.3 0v76M450.3 0v76" stroke="#303030" stroke-width="1.800"/><path d="M0 38.0h458" stroke="#5078e0" stroke-opacity=".88" stroke-width="1.800"/><path d="M0.0 6.5 L2.0 6.7 L4.0 7.5 L6.0 8.7 L8.0 10.4 L10.0 12.5 L12.0 15.0 L14.0 17.9 L16.0 21.1 L18.0 24.6 L20.0 28.3 L22.0 32.1 L24.0 36.0 L26.0 40.0 L28.0 43.9 L30.0 47.7 L32.0 51.4 L34.0 54.9 L36.0 58.1 L38.0 61.0 L40.0 63.5 L42.0 65.6 L44.0 67.3 L46.0 68.5 L48.0 69.3 L50.0 69.5 L52.0 69.3 L54.0 68.5 L56.0 67.3 L58.0 65.6 L60.0 63.5 L62.0 61.0 L64.0 58.1 L66.0 54.9 L68.0 51.4 L70.0 47.7 L72.0 43.9 L74.0 40.0 L76.0 36.0 L78.0 32.1 L80.0 28.3 L82.0 24.6 L84.0 21.1 L86.0 17.9 L88.0 15.0 L90.0 12.5 L92.0 10.4 L94.0 8.7 L96.0 7.5 L98.0 6.7 L100.0 6.5 L102.0 6.7 L104.0 7.5 L106.0 8.7 L108.0 10.4 L110.0 12.5 L112.0 15.0 L114.0 17.9 L116.0 21.1 L118.0 24.6 L120.0 28.3 L122.0 32.1 L124.0 36.0 L126.0 40.0 L128.0 43.9 L130.0 47.7 L132.0 51.4 L134.0 54.9 L136.0 58.1 L138.0 61.0 L140.0 63.5 L142.0 65.6 L144.0 67.3 L146.0 68.5 L148.0 69.3 L150.0 69.5 L152.0 69.3 L154.0 68.5 L156.0 67.3 L158.0 65.6 L160.0 63.5 L162.0 61.0 L164.0 58.1 L166.0 54.9 L168.0 51.4 L170.0 47.7 L172.0 43.9 L174.0 40.0 L176.0 36.0 L178.0 32.1 L180.0 28.3 L182.0 24.6 L184.0 21.1 L186.0 17.9 L188.0 15.0 L190.0 12.5 L192.0 10.4 L194.0 8.7 L196.0 7.5 L198.0 6.7 L200.0 6.5 L202.0 6.7 L204.0 7.5 L206.0 8.7 L208.0 10.4 L210.0 12.5 L212.0 15.0 L214.0 17.9 L216.0 21.1 L218.0 24.6 L220.0 28.3 L222.0 32.1 L224.0 36.0 L226.0 40.0 L228.0 43.9 L230.0 47.7 L232.0 51.4 L234.0 54.9 L236.0 58.1 L238.0 61.0 L240.0 63.5 L242.0 65.6 L244.0 67.3 L246.0 68.5 L248.0 69.3 L250.0 69.5 L252.0 69.3 L254.0 68.5 L256.0 67.3 L258.0 65.6 L260.0 63.5 L262.0 61.0 L264.0 58.1 L266.0 54.9 L268.0 51.4 L270.0 47.7 L272.0 43.9 L274.0 40.0 L276.0 36.0 L278.0 32.1 L280.0 28.3 L282.0 24.6 L284.0 21.1 L286.0 17.9 L288.0 15.0 L290.0 12.5 L292.0 10.4 L294.0 8.7 L296.0 7.5 L298.0 6.7 L300.0 6.5 L302.0 6.7 L304.0 7.5 L306.0 8.7 L308.0 10.4 L310.0 12.5 L312.0 15.0 L314.0 17.9 L316.0 21.1 L318.0 24.6 L320.0 28.3 L322.0 32.1 L324.0 36.0 L326.0 40.0 L328.0 43.9 L330.0 47.7 L332.0 51.4 L334.0 54.9 L336.0 58.1 L338.0 61.0 L340.0 63.5 L342.0 65.6 L344.0 67.3 L346.0 68.5 L348.0 69.3 L350.0 69.5 L352.0 69.3 L354.0 68.5 L356.0 67.3 L358.0 65.6 L360.0 63.5 L362.0 61.0 L364.0 58.1 L366.0 54.9 L368.0 51.4 L370.0 47.7 L372.0 43.9 L374.0 40.0 L376.0 36.0 L378.0 32.1 L380.0 28.3 L382.0 24.6 L384.0 21.1 L386.0 17.9 L388.0 15.0 L390.0 12.5 L392.0 10.4 L394.0 8.7 L396.0 7.5 L398.0 6.7 L400.0 6.5 L402.0 6.7 L404.0 7.5 L406.0 8.7 L408.0 10.4 L410.0 12.5 L412.0 15.0 L414.0 17.9 L416.0 21.1 L418.0 24.6 L420.0 28.3 L422.0 32.1 L424.0 36.0 L426.0 40.0 L428.0 43.9 L430.0 47.7 L432.0 51.4 L434.0 54.9 L436.0 58.1 L438.0 61.0 L440.0 63.5 L442.0 65.6 L444.0 67.3 L446.0 68.5 L448.0 69.3 L450.0 69.5 L452.0 69.3 L454.0 68.5 L456.0 67.3 L458.0 65.6" fill="none" stroke="#e07272" stroke-width="1.200"/><path d="M0.0 8.1 L2.0 9.6 L4.0 11.5 L6.0 13.9 L8.0 16.6 L10.0 19.6 L12.0 23.0 L14.0 26.6 L16.0 30.4 L18.0 34.2 L20.0 38.2 L22.0 42.1 L24.0 46.0 L26.0 49.8 L28.0 53.3 L30.0 56.7 L32.0 59.7 L34.0 62.4 L36.0 64.7 L38.0 66.6 L40.0 68.0 L42.0 69.0 L44.0 69.4 L46.0 69.4 L48.0 68.9 L50.0 67.9 L52.0 66.4 L54.0 64.5 L56.0 62.1 L58.0 59.4 L60.0 56.4 L62.0 53.0 L64.0 49.4 L66.0 45.6 L68.0 41.8 L70.0 37.8 L72.0 33.9 L74.0 30.0 L76.0 26.2 L78.0 22.7 L80.0 19.3 L82.0 16.3 L84.0 13.6 L86.0 11.3 L88.0 9.4 L90.0 8.0 L92.0 7.0 L94.0 6.6 L96.0 6.6 L98.0 7.1 L100.0 8.1 L102.0 9.6 L104.0 11.5 L106.0 13.9 L108.0 16.6 L110.0 19.6 L112.0 23.0 L114.0 26.6 L116.0 30.4 L118.0 34.2 L120.0 38.2 L122.0 42.1 L124.0 46.0 L126.0 49.8 L128.0 53.3 L130.0 56.7 L132.0 59.7 L134.0 62.4 L136.0 64.7 L138.0 66.6 L140.0 68.0 L142.0 69.0 L144.0 69.4 L146.0 69.4 L148.0 68.9 L150.0 67.9 L152.0 66.4 L154.0 64.5 L156.0 62.1 L158.0 59.4 L160.0 56.4 L162.0 53.0 L164.0 49.4 L166.0 45.6 L168.0 41.8 L170.0 37.8 L172.0 33.9 L174.0 30.0 L176.0 26.2 L178.0 22.7 L180.0 19.3 L182.0 16.3 L184.0 13.6 L186.0 11.3 L188.0 9.4 L190.0 8.0 L192.0 7.0 L194.0 6.6 L196.0 6.6 L198.0 7.1 L200.0 8.1 L202.0 9.6 L204.0 11.5 L206.0 13.9 L208.0 16.6 L210.0 19.6 L212.0 23.0 L214.0 26.6 L216.0 30.4 L218.0 34.2 L220.0 38.2 L222.0 42.1 L224.0 46.0 L226.0 49.8 L228.0 53.3 L230.0 56.7 L232.0 59.7 L234.0 62.4 L236.0 64.7 L238.0 66.6 L240.0 68.0 L242.0 69.0 L244.0 69.4 L246.0 69.4 L248.0 68.9 L250.0 67.9 L252.0 66.4 L254.0 64.5 L256.0 62.1 L258.0 59.4 L260.0 56.4 L262.0 53.0 L264.0 49.4 L266.0 45.6 L268.0 41.8 L270.0 37.8 L272.0 33.9 L274.0 30.0 L276.0 26.2 L278.0 22.7 L280.0 19.3 L282.0 16.3 L284.0 13.6 L286.0 11.3 L288.0 9.4 L290.0 8.0 L292.0 7.0 L294.0 6.6 L296.0 6.6 L298.0 7.1 L300.0 8.1 L302.0 9.6 L304.0 11.5 L306.0 13.9 L308.0 16.6 L310.0 19.6 L312.0 23.0 L314.0 26.6 L316.0 30.4 L318.0 34.2 L320.0 38.2 L322.0 42.1 L324.0 46.0 L326.0 49.8 L328.0 53.3 L330.0 56.7 L332.0 59.7 L334.0 62.4 L336.0 64.7 L338.0 66.6 L340.0 68.0 L342.0 69.0 L344.0 69.4 L346.0 69.4 L348.0 68.9 L350.0 67.9 L352.0 66.4 L354.0 64.5 L356.0 62.1 L358.0 59.4 L360.0 56.4 L362.0 53.0 L364.0 49.4 L366.0 45.6 L368.0 41.8 L370.0 37.8 L372.0 33.9 L374.0 30.0 L376.0 26.2 L378.0 22.7 L380.0 19.3 L382.0 16.3 L384.0 13.6 L386.0 11.3 L388.0 9.4 L390.0 8.0 L392.0 7.0 L394.0 6.6 L396.0 6.6 L398.0 7.1 L400.0 8.1 L402.0 9.6 L404.0 11.5 L406.0 13.9 L408.0 16.6 L410.0 19.6 L412.0 23.0 L414.0 26.6 L416.0 30.4 L418.0 34.2 L420.0 38.2 L422.0 42.1 L424.0 46.0 L426.0 49.8 L428.0 53.3 L430.0 56.7 L432.0 59.7 L434.0 62.4 L436.0 64.7 L438.0 66.6 L440.0 68.0 L442.0 69.0 L444.0 69.4 L446.0 69.4 L448.0 68.9 L450.0 67.9 L452.0 66.4 L454.0 64.5 L456.0 62.1 L458.0 59.4" fill="none" stroke="#84dcb4" stroke-width="1.200"/><path d="M0.0 12.8 L2.0 15.3 L4.0 18.2 L6.0 21.5 L8.0 24.9 L10.0 28.6 L12.0 32.5 L14.0 36.4 L16.0 40.4 L18.0 44.3 L20.0 48.1 L22.0 51.8 L24.0 55.2 L26.0 58.4 L28.0 61.2 L30.0 63.7 L32.0 65.8 L34.0 67.4 L36.0 68.6 L38.0 69.3 L40.0 69.5 L42.0 69.2 L44.0 68.4 L46.0 67.1 L48.0 65.4 L50.0 63.2 L52.0 60.7 L54.0 57.8 L56.0 54.5 L58.0 51.1 L60.0 47.4 L62.0 43.5 L64.0 39.6 L66.0 35.6 L68.0 31.7 L70.0 27.9 L72.0 24.2 L74.0 20.8 L76.0 17.6 L78.0 14.8 L80.0 12.3 L82.0 10.2 L84.0 8.6 L86.0 7.4 L88.0 6.7 L90.0 6.5 L92.0 6.8 L94.0 7.6 L96.0 8.9 L98.0 10.6 L100.0 12.8 L102.0 15.3 L104.0 18.2 L106.0 21.5 L108.0 24.9 L110.0 28.6 L112.0 32.5 L114.0 36.4 L116.0 40.4 L118.0 44.3 L120.0 48.1 L122.0 51.8 L124.0 55.2 L126.0 58.4 L128.0 61.2 L130.0 63.7 L132.0 65.8 L134.0 67.4 L136.0 68.6 L138.0 69.3 L140.0 69.5 L142.0 69.2 L144.0 68.4 L146.0 67.1 L148.0 65.4 L150.0 63.2 L152.0 60.7 L154.0 57.8 L156.0 54.5 L158.0 51.1 L160.0 47.4 L162.0 43.5 L164.0 39.6 L166.0 35.6 L168.0 31.7 L170.0 27.9 L172.0 24.2 L174.0 20.8 L176.0 17.6 L178.0 14.8 L180.0 12.3 L182.0 10.2 L184.0 8.6 L186.0 7.4 L188.0 6.7 L190.0 6.5 L192.0 6.8 L194.0 7.6 L196.0 8.9 L198.0 10.6 L200.0 12.8 L202.0 15.3 L204.0 18.2 L206.0 21.5 L208.0 24.9 L210.0 28.6 L212.0 32.5 L214.0 36.4 L216.0 40.4 L218.0 44.3 L220.0 48.1 L222.0 51.8 L224.0 55.2 L226.0 58.4 L228.0 61.2 L230.0 63.7 L232.0 65.8 L234.0 67.4 L236.0 68.6 L238.0 69.3 L240.0 69.5 L242.0 69.2 L244.0 68.4 L246.0 67.1 L248.0 65.4 L250.0 63.2 L252.0 60.7 L254.0 57.8 L256.0 54.5 L258.0 51.1 L260.0 47.4 L262.0 43.5 L264.0 39.6 L266.0 35.6 L268.0 31.7 L270.0 27.9 L272.0 24.2 L274.0 20.8 L276.0 17.6 L278.0 14.8 L280.0 12.3 L282.0 10.2 L284.0 8.6 L286.0 7.4 L288.0 6.7 L290.0 6.5 L292.0 6.8 L294.0 7.6 L296.0 8.9 L298.0 10.6 L300.0 12.8 L302.0 15.3 L304.0 18.2 L306.0 21.5 L308.0 24.9 L310.0 28.6 L312.0 32.5 L314.0 36.4 L316.0 40.4 L318.0 44.3 L320.0 48.1 L322.0 51.8 L324.0 55.2 L326.0 58.4 L328.0 61.2 L330.0 63.7 L332.0 65.8 L334.0 67.4 L336.0 68.6 L338.0 69.3 L340.0 69.5 L342.0 69.2 L344.0 68.4 L346.0 67.1 L348.0 65.4 L350.0 63.2 L352.0 60.7 L354.0 57.8 L356.0 54.5 L358.0 51.1 L360.0 47.4 L362.0 43.5 L364.0 39.6 L366.0 35.6 L368.0 31.7 L370.0 27.9 L372.0 24.2 L374.0 20.8 L376.0 17.6 L378.0 14.8 L380.0 12.3 L382.0 10.2 L384.0 8.6 L386.0 7.4 L388.0 6.7 L390.0 6.5 L392.0 6.8 L394.0 7.6 L396.0 8.9 L398.0 10.6 L400.0 12.8 L402.0 15.3 L404.0 18.2 L406.0 21.5 L408.0 24.9 L410.0 28.6 L412.0 32.5 L414.0 36.4 L416.0 40.4 L418.0 44.3 L420.0 48.1 L422.0 51.8 L424.0 55.2 L426.0 58.4 L428.0 61.2 L430.0 63.7 L432.0 65.8 L434.0 67.4 L436.0 68.6 L438.0 69.3 L440.0 69.5 L442.0 69.2 L444.0 68.4 L446.0 67.1 L448.0 65.4 L450.0 63.2 L452.0 60.7 L454.0 57.8 L456.0 54.5 L458.0 51.1" fill="none" stroke="#38b0f0" stroke-width="1.200"/></svg>
<div class="ring" style="left:14px;top:390px"></div>
<div class="t" style="left:30px;top:387px;font-size:13px;letter-spacing:-0.45px;letter-spacing:-0.52px">Strength</div>
<div class="inp" style="left:177px;top:387px;width:94px;height:16px"></div>
<div class="t" style="left:182px;top:387px;color:#6a6a6a;font-size:13px;letter-spacing:-0.45px;font-size:10px;">%</div>
<div class="t" style="left:194px;top:387px;color:#e4e4e4;font-size:13px;letter-spacing:-0.45px;letter-spacing:-0.78px">100.0</div>
<div class="ring" style="left:14px;top:412px"></div>
<div class="t" style="left:30px;top:409px;font-size:13px;letter-spacing:-0.45px;letter-spacing:-0.65px">Strength Fades to Zero</div>
<div class="inp" style="left:177px;top:409px;width:16px;height:16px"></div>
<svg class="a" style="left:178px;top:410px" width="14" height="14" viewBox="0 0 14 14"><path d="M1.500 7.500 5 11 12.500 2.500" fill="none" stroke="#2fd673" stroke-width="2"/></svg>
<div class="ring" style="left:14px;top:434px"></div>
<div class="t" style="left:30px;top:431px;font-size:13px;letter-spacing:-0.45px;letter-spacing:-1.16px">Type</div>
<div class="a" style="left:177px;top:432px;width:193px;height:14px;background:#555;border-radius:2px"></div>
<div class="t" style="left:180px;top:431px;font-size:13px;letter-spacing:-0.45px;letter-spacing:-1.01px">Cosine</div>
<div class="chev" style="left:357px;top:434px"></div>
<div class="ring" style="left:14px;top:456px"></div>
<div class="t" style="left:30px;top:453px;font-size:13px;letter-spacing:-0.45px;letter-spacing:-0.81px">Wave Style</div>
<div class="a" style="left:177px;top:454px;width:193px;height:14px;background:#555;border-radius:2px"></div>
<div class="t" style="left:180px;top:453px;font-size:13px;letter-spacing:-0.45px;letter-spacing:-0.52px">Normal</div>
<div class="chev" style="left:357px;top:456px"></div>
<div class="t dim" style="left:30px;top:475px;font-size:13px;letter-spacing:-0.45px;letter-spacing:-0.91px">Graph</div>
<div class="btn" style="left:178px;top:475px;width:16px;height:16px;background:#333;border-color:#444"></div>
<div class="a" style="left:6px;top:496px;width:468px;height:1px;background:#2a2a2a"></div>
<div class="ring" style="left:14px;top:505px"></div>
<div class="t" style="left:30px;top:502px;font-size:13px;letter-spacing:-0.45px;letter-spacing:-0.45px">Minimum</div>
<div class="inp" style="left:177px;top:502px;width:94px;height:16px"></div>
<div class="t" style="left:182px;top:502px;color:#6a6a6a;font-size:13px;letter-spacing:-0.45px;">#</div>
<div class="t" style="left:194px;top:502px;color:#e4e4e4;font-size:13px;letter-spacing:-0.45px;letter-spacing:-0.65px">-400.0</div>
<div class="a" style="left:9px;top:523px;width:463px;height:19px;background:#555;border-radius:3px"></div>
<div class="ring" style="left:14px;top:527px"></div>
<div class="t" style="left:30px;top:524px;font-size:13px;letter-spacing:-0.45px;letter-spacing:-0.72px">Maximum</div>
<div class="inp" style="left:177px;top:524px;width:94px;height:16px"></div>
<div class="t" style="left:182px;top:524px;color:#6a6a6a;font-size:13px;letter-spacing:-0.45px;">#</div>
<div class="t" style="left:194px;top:524px;color:#e4e4e4;font-size:13px;letter-spacing:-0.45px;letter-spacing:-0.63px">400.0</div>
<div class="ring" style="left:14px;top:549px"></div>
<div class="t" style="left:30px;top:546px;font-size:13px;letter-spacing:-0.45px;letter-spacing:-0.49px">Value Offset</div>
<div class="inp" style="left:177px;top:546px;width:94px;height:16px"></div>
<div class="t" style="left:182px;top:546px;color:#6a6a6a;font-size:13px;letter-spacing:-0.45px;">#</div>
<div class="t" style="left:194px;top:546px;color:#e4e4e4;font-size:13px;letter-spacing:-0.45px;">0.0</div>
<div class="ring" style="left:14px;top:571px"></div>
<div class="t" style="left:30px;top:568px;font-size:13px;letter-spacing:-0.45px;letter-spacing:-0.96px">Stagger</div>
<div class="inp" style="left:177px;top:568px;width:94px;height:16px"></div>
<div class="t" style="left:182px;top:568px;color:#6a6a6a;font-size:13px;letter-spacing:-0.45px;">#</div>
<div class="t" style="left:194px;top:568px;color:#e4e4e4;font-size:13px;letter-spacing:-0.45px;">20.0</div>
<div class="ring" style="left:14px;top:593px"></div>
<div class="t" style="left:30px;top:590px;font-size:13px;letter-spacing:-0.45px;letter-spacing:-0.86px">Separate Channels</div>
<div class="inp" style="left:177px;top:590px;width:16px;height:16px"></div>
<div class="a" style="left:6px;top:611px;width:468px;height:1px;background:#2a2a2a"></div>
<div class="ring" style="left:14px;top:620px"></div>
<div class="t" style="left:30px;top:617px;font-size:13px;letter-spacing:-0.45px;letter-spacing:-0.69px">Time Mode</div>
<div class="a" style="left:177px;top:618px;width:193px;height:14px;background:#555;border-radius:2px"></div>
<div class="t" style="left:180px;top:617px;font-size:13px;letter-spacing:-0.45px;letter-spacing:-1.27px">Seconds</div>
<div class="chev" style="left:357px;top:620px"></div>
<div class="ring" style="left:14px;top:642px"></div>
<div class="t" style="left:30px;top:639px;font-size:13px;letter-spacing:-0.45px;letter-spacing:-0.80px">Frequency</div>
<div class="inp" style="left:177px;top:639px;width:94px;height:16px"></div>
<div class="t" style="left:182px;top:639px;color:#6a6a6a;font-size:13px;letter-spacing:-0.45px;">#</div>
<div class="t" style="left:194px;top:639px;color:#e4e4e4;font-size:13px;letter-spacing:-0.45px;">5.0</div>
<div class="ring" style="left:14px;top:664px"></div>
<div class="t" style="left:30px;top:661px;font-size:13px;letter-spacing:-0.45px;letter-spacing:-0.80px">Time</div>
<div class="inp" style="left:177px;top:661px;width:94px;height:16px"></div>
<div class="t" style="left:182px;top:661px;color:#6a6a6a;font-size:13px;letter-spacing:-0.45px;">#</div>
<div class="t" style="left:194px;top:661px;color:#e3c46a;font-size:13px;letter-spacing:-0.45px;">77.0</div>
<div class="a" style="left:261px;top:661px;width:10px;height:16px;background:#3f3f3f;border-radius:0 2px 2px 0"></div>
<svg class="a" style="left:251px;top:665px" width="7" height="8" viewBox="0 0 7 8"><path d="M7 0.500H4L0 4l4 3.500h3z" fill="#e3c46a"/></svg>
<svg class="a" style="left:263px;top:665px" width="7" height="8" viewBox="0 0 7 8"><path d="M0 0.500h3l4 3.500-4 3.500H0z" fill="#8a8a8a"/></svg>
<div class="btn" style="left:273px;top:662px;width:16px;height:15px;background:#2b2b2b;border-color:#555"></div>
<svg class="a" style="left:277px;top:666px" width="8" height="8" viewBox="0 0 8 8"><path d="M0.500 0.500l7 7M7.500 0.500l-7 7" stroke="#ddd" stroke-width="1.100"/></svg>
<div class="ring" style="left:14px;top:686px"></div>
<div class="t" style="left:30px;top:683px;font-size:13px;letter-spacing:-0.45px;letter-spacing:-0.48px">Time Offset</div>
<div class="inp" style="left:177px;top:683px;width:94px;height:16px"></div>
<div class="t" style="left:182px;top:683px;color:#6a6a6a;font-size:13px;letter-spacing:-0.45px;">S</div>
<div class="t" style="left:194px;top:683px;color:#e4e4e4;font-size:13px;letter-spacing:-0.45px;">0.0</div>
<div class="ring" style="left:14px;top:708px"></div>
<div class="t" style="left:30px;top:705px;font-size:13px;letter-spacing:-0.45px;letter-spacing:-1.02px">Time Scale</div>
<div class="inp" style="left:177px;top:705px;width:94px;height:16px"></div>
<div class="t" style="left:182px;top:705px;color:#6a6a6a;font-size:13px;letter-spacing:-0.45px;">#</div>
<div class="t" style="left:194px;top:705px;color:#e4e4e4;font-size:13px;letter-spacing:-0.45px;">1.0</div>
<div class="a" style="left:123px;top:315px;width:233px;height:22px;background:#585858;border:1px solid #a8c070;border-radius:5px;text-align:center;line-height:20px;font-size:13px;letter-spacing:-0.45px;">Oscillator [Position.Z] Cosine</div>
<div class="a" style="left:97px;top:396px;width:304px;height:151px;border:3px solid #b4e61e"></div>
<div class="a" style="left:109px;top:410px;width:282px;height:109px;background:#2b2b2b;border:1px solid #1e1e1e;box-shadow:0 0 4px rgba(0,0,0,.5)"></div>
<div class="t" style="left:110px;top:412px;width:280px;text-align:center;font-size:13px;letter-spacing:-0.45px;letter-spacing:-0.72px">Maximum</div>
<svg class="a" style="left:377px;top:416px" width="8" height="8" viewBox="0 0 8 8"><path d="M0.500 0.500l7 7M7.500 0.500l-7 7" stroke="#ddd" stroke-width="1.100"/></svg>
<div class="a" style="left:112px;top:429px;width:276px;height:21px;background:#3a3a3a"></div>
<div class="t" style="left:113px;top:431px;font-size:13px;letter-spacing:-0.45px;letter-spacing:-0.90px">Use Expression</div>
<div class="inp" style="left:371px;top:431px;width:16px;height:16px;background:#2a2a2a"></div>
<div class="a" style="left:113px;top:451px;width:274px;height:65px;background:#262626"></div>
<div class="a" style="left:115px;top:453px;width:18px;height:17px;background:#333;border-radius:2px"></div>
<div class="t" style="left:120px;top:453px;color:#444;font-size:13px;letter-spacing:-0.45px;">#</div>
<div class="t" style="left:140px;top:456px;font-family:'Liberation Mono',monospace;font-size:13px;letter-spacing:0;color:#8a8a8a">E.g. *2, /3, %4, sqrt(value)</div>
<div class="t" style="left:122px;top:479px;height:24px;line-height:24px;font-size:20px;font-weight:bold;letter-spacing:-0.2px;color:#b4e61e;letter-spacing:-0.13px">Hapus ini</div>
<div class="a" style="left:6px;top:728px;width:468px;height:23px;background:#2b2b2b;border:solid #c6f06c;border-width:1.500px 4px 0 3px;border-radius:2px 3px 0 0"></div>
<div class="chev" style="left:15px;top:735px;border-color:#ccc"></div>
<div class="a" style="left:28px;top:731px;width:18px;height:18px;background:#3a3a3a;border-radius:3px"></div>
<svg class="a" style="left:31px;top:734px" width="13" height="13" viewBox="0 0 13 13"><path d="M11 6.500a4.800 4.800 0 1 1-2.500-4.200" fill="none" stroke="#e0e0e0" stroke-width="1.200"/><path d="M3.800 6.200 6.200 8.600 11.500 2" fill="none" stroke="#e0e0e0" stroke-width="1.300"/></svg>
<div class="ring" style="left:50px;top:735px;border-color:#777"></div>
<svg class="a" style="left:64px;top:734px" width="19" height="13" viewBox="0 0 19 13"><path d="M0.500 7c1.500-7 3-7 4.500 0s3 7 4.500 0 3-7 4.500 0 3 7 4.500 0" fill="none" stroke="#3ddc84" stroke-width="1.500"/></svg>
<div class="t" style="left:87px;top:732px;font-size:13px;letter-spacing:-0.45px;letter-spacing:-0.54px">Oscillator [Position.X] Sine</div>
<div class="btn" style="left:365px;top:731px;width:18px;height:18px;background:#2b2b2b;border-color:#444"></div>
<svg class="a" style="left:367px;top:734px" width="14" height="12" viewBox="0 0 14 12"><path d="M0 2.500h5M0 8.500h5M7 5.500h6" stroke="#e8e8e8" stroke-width="2"/><path d="M5.500 2v7" stroke="#888" stroke-width="1.200"/><path d="M11 12l3-3v3z" fill="#3ddc84"/></svg>
<div class="a" style="left:386px;top:731px;width:20px;height:18px;background:#333;border-radius:3px"></div>
<svg class="a" style="left:388px;top:736px" width="7" height="8" viewBox="0 0 7 8"><path d="M7 0.500H4L0 4l4 3.500h3z" fill="#e3c46a"/></svg>
<svg class="a" style="left:398px;top:736px" width="7" height="8" viewBox="0 0 7 8"><path d="M0 0.500h3l4 3.500-4 3.500H0z" fill="#d050f0"/></svg>
<div class="btn" style="left:410px;top:731px;width:18px;height:18px;background:#2b2b2b;border-color:#444"></div>
<svg class="a" style="left:414px;top:733px" width="10" height="14" viewBox="0 0 10 14"><path d="M2.500 0.500h5v1.500l-1 .5v3.500l2.500 2v1H1v-1l2.500-2V2.500l-1-.5z" fill="#e8e8e8"/><path d="M5 9v4.500" stroke="#e8e8e8" stroke-width="1.200"/></svg>
<div class="btn" style="left:431px;top:731px;width:18px;height:18px;background:#2b2b2b;border-color:#444"></div>
<svg class="a" style="left:433px;top:733px" width="14" height="14" viewBox="0 0 14 14"><path d="M8.500 4.500l1 2.800 2.800 1-2.800 1-1 2.800-1-2.800-2.800-1 2.800-1z" fill="#ddd"/><circle cx="3" cy="3" r="1" fill="#ddd"/><circle cx="7.500" cy="2" r=".9" fill="#ddd"/><circle cx="2.500" cy="7.500" r=".9" fill="#ddd"/><path d="M11 14l3-3v3z" fill="#3ddc84"/></svg>
<div class="btn" style="left:451px;top:731px;width:18px;height:18px;background:#2b2b2b;border-color:#444"></div>
<svg class="a" style="left:456px;top:736px" width="8" height="8" viewBox="0 0 8 8"><path d="M0.500 0.500l7 7M7.500 0.500l-7 7" stroke="#ddd" stroke-width="1.100"/></svg>
<div class="a" style="left:6px;top:751px;width:468px;height:22px;background:#2b2b2b"></div>
<div class="a" style="left:184px;top:753px;width:96px;height:20px;background:#464646;border-radius:4px 4px 0 0"></div>
<div class="t" style="left:184px;top:754px;width:96px;text-align:center;font-size:13px;letter-spacing:-0.45px;letter-spacing:-0.73px">Behaviour</div>
<div class="t" style="left:280px;top:754px;width:96px;text-align:center;color:#aaa;font-size:13px;letter-spacing:-0.45px;letter-spacing:-0.45px">Deformer</div>
<div class="t" style="left:372px;top:754px;width:8px;text-align:center;color:#aaa;font-size:13px;letter-spacing:-0.45px;">|</div>
<div class="t" style="left:376px;top:754px;width:96px;text-align:center;color:#aaa;font-size:13px;letter-spacing:-0.45px;letter-spacing:-0.55px">Falloffs</div>
<div class="ring" style="left:14px;top:863px"></div>
<div class="t" style="left:30px;top:860px;font-size:13px;letter-spacing:-0.45px;letter-spacing:-0.52px">Strength</div>
<div class="inp" style="left:177px;top:860px;width:94px;height:16px"></div>
<div class="t" style="left:182px;top:860px;color:#6a6a6a;font-size:13px;letter-spacing:-0.45px;font-size:10px;">%</div>
<div class="t" style="left:194px;top:860px;color:#e4e4e4;font-size:13px;letter-spacing:-0.45px;letter-spacing:-0.78px">100.0</div>
<div class="ring" style="left:14px;top:885px"></div>
<div class="t" style="left:30px;top:882px;font-size:13px;letter-spacing:-0.45px;letter-spacing:-0.65px">Strength Fades to Zero</div>
<div class="inp" style="left:177px;top:882px;width:16px;height:16px"></div>
<svg class="a" style="left:178px;top:883px" width="14" height="14" viewBox="0 0 14 14"><path d="M1.500 7.500 5 11 12.500 2.500" fill="none" stroke="#2fd673" stroke-width="2"/></svg>
<div class="ring" style="left:14px;top:907px"></div>
<div class="t" style="left:30px;top:904px;font-size:13px;letter-spacing:-0.45px;letter-spacing:-1.16px">Type</div>
<div class="a" style="left:177px;top:905px;width:193px;height:14px;background:#555;border-radius:2px"></div>
<div class="t" style="left:180px;top:904px;font-size:13px;letter-spacing:-0.45px;letter-spacing:-1.01px">Cosine</div>
<div class="chev" style="left:357px;top:907px"></div>
<div class="ring" style="left:14px;top:929px"></div>
<div class="t" style="left:30px;top:926px;font-size:13px;letter-spacing:-0.45px;letter-spacing:-0.81px">Wave Style</div>
<div class="a" style="left:177px;top:927px;width:193px;height:14px;background:#555;border-radius:2px"></div>
<div class="t" style="left:180px;top:926px;font-size:13px;letter-spacing:-0.45px;letter-spacing:-0.52px">Normal</div>
<div class="chev" style="left:357px;top:929px"></div>
<div class="t dim" style="left:30px;top:949px;font-size:13px;letter-spacing:-0.45px;letter-spacing:-0.91px">Graph</div>
<div class="btn" style="left:178px;top:948px;width:16px;height:16px;background:#333;border-color:#444"></div>
<svg class="a" style="left:180px;top:950px" width="12" height="12" viewBox="0 0 12 12"><path d="M2 0v12M0 10h12M2 10 11 3" fill="none" stroke="#ddd" stroke-width="1"/></svg>
<div class="a" style="left:6px;top:969px;width:468px;height:1px;background:#2a2a2a"></div>
<div class="ring" style="left:14px;top:978px"></div>
<div class="t" style="left:30px;top:975px;font-size:13px;letter-spacing:-0.45px;letter-spacing:-0.45px">Minimum</div>
<div class="inp" style="left:177px;top:975px;width:94px;height:16px"></div>
<div class="t" style="left:182px;top:975px;color:#6a6a6a;font-size:13px;letter-spacing:-0.45px;">#</div>
<div class="t" style="left:194px;top:975px;color:#e3c46a;font-size:13px;letter-spacing:-0.45px;letter-spacing:-0.65px">-400.0</div>
<div class="a" style="left:261px;top:975px;width:10px;height:16px;background:#3f3f3f;border-radius:0 2px 2px 0"></div>
<svg class="a" style="left:251px;top:979px" width="7" height="8" viewBox="0 0 7 8"><path d="M7 0.500H4L0 4l4 3.500h3z" fill="#e3c46a"/></svg>
<svg class="a" style="left:263px;top:979px" width="7" height="8" viewBox="0 0 7 8"><path d="M0 0.500h3l4 3.500-4 3.500H0z" fill="#d050f0"/></svg>
<div class="ring" style="left:14px;top:1000px"></div>
<div class="t" style="left:30px;top:997px;font-size:13px;letter-spacing:-0.45px;letter-spacing:-0.72px">Maximum</div>
<div class="inp" style="left:177px;top:997px;width:94px;height:16px"></div>
<div class="t" style="left:182px;top:997px;color:#6a6a6a;font-size:13px;letter-spacing:-0.45px;">#</div>
<div class="t" style="left:194px;top:997px;color:#e3c46a;font-size:13px;letter-spacing:-0.45px;letter-spacing:-0.63px">400.0</div>
<div class="a" style="left:261px;top:997px;width:10px;height:16px;background:#3f3f3f;border-radius:0 2px 2px 0"></div>
<svg class="a" style="left:251px;top:1001px" width="7" height="8" viewBox="0 0 7 8"><path d="M7 0.500H4L0 4l4 3.500h3z" fill="#e3c46a"/></svg>
<svg class="a" style="left:263px;top:1001px" width="7" height="8" viewBox="0 0 7 8"><path d="M0 0.500h3l4 3.500-4 3.500H0z" fill="#8a8a8a"/></svg>
<div class="a" style="left:153px;top:997px;width:16px;height:16px;background:#2b2b2b;border-radius:3px"></div>
<div class="t" style="left:153px;top:997px;width:16px;text-align:center;font-size:12px;letter-spacing:0">π</div>
<div class="a" style="left:6px;top:1016px;width:468px;height:9px;overflow:hidden">
<div class="ring" style="left:8px;top:6px"></div><div class="inp" style="left:171px;top:3px;width:94px;height:16px"></div><div class="t" style="left:24px;top:3px;font-size:13px;letter-spacing:-0.45px;letter-spacing:-0.49px">Value Offset</div><div class="t" style="left:188px;top:3px;font-size:13px;letter-spacing:-0.45px;">0.0</div>
</div>
<!-- TOOLS COLUMN -->
<div class="a" style="left:494px;top:85px;width:30px;height:495px;background:#444"></div>
<div class="a" style="left:503px;top:90px;width:2px;height:2px;background:#8a8a8a;box-shadow:4px 0 0 #8a8a8a,8px 0 0 #8a8a8a"></div>
<div class="a" style="left:495px;top:96px;width:28px;height:28px;background:#161616;border-radius:3px"></div>
<svg class="a" style="left:498px;top:99px" width="22" height="22" viewBox="0 0 22 22"><path d="M6 2.500v15l4-3.500 2.500 5.500 2.500-1.200-2.500-5.300h5z" fill="none" stroke="#2fd673" stroke-width="1.400" stroke-linejoin="round"/></svg>
<svg class="a" style="left:498px;top:129px" width="22" height="22" viewBox="0 0 22 22"><path d="M5 2l14 10-13 8 1.500-9z" fill="#e2e2e2"/></svg>
<svg class="a" style="left:498px;top:159px" width="22" height="22" viewBox="0 0 22 22"><path d="M3 3l10 3 5 8-4 4-8-5zM13 15l4 4 2-2-4-4" fill="#e2e2e2"/><circle cx="10.500" cy="10.500" r="1.600" fill="#444"/><path d="M3 3l7 7" stroke="#444" stroke-width="1"/></svg>
<svg class="a" style="left:498px;top:189px" width="22" height="22" viewBox="0 0 22 22"><path d="M16 2.500l3.500 3.500-10 10-4.500 1.500 1-4.500z" fill="#e2e2e2"/><path d="M3 19.500l2-2" stroke="#e2e2e2" stroke-width="1.500"/></svg>
<svg class="a" style="left:498px;top:219px" width="22" height="22" viewBox="0 0 22 22"><path d="M1 6h13v11H1zM14.500 11.500l6.500-4.500v9z" fill="#e2e2e2"/><rect x="4" y="3.500" width="7" height="1.800" fill="#e2e2e2"/><circle cx="4" cy="9" r="1.200" fill="#444"/></svg>
<svg class="a" style="left:498px;top:249px" width="22" height="22" viewBox="0 0 22 22"><path d="M3 19L19 3" stroke="#e2e2e2" stroke-width="1.400"/></svg>
<svg class="a" style="left:498px;top:279px" width="22" height="22" viewBox="0 0 22 22"><path d="M4 4h14v4h-5v11H9V8H4z" fill="#e2e2e2"/></svg>
<svg class="a" style="left:498px;top:309px" width="22" height="22" viewBox="0 0 22 22"><path d="M3 4l4 2-2 2zM4 9l3 10h10l-2-15" fill="none" stroke="#e2e2e2" stroke-width="1.200" stroke-dasharray="2.500 2"/><path d="M2 2l9 4-4.500 1.500L5 12z" fill="#e2e2e2"/><path d="M5 19h13" stroke="#e2e2e2" stroke-width="1.600"/></svg>
<svg class="a" style="left:498px;top:339px" width="22" height="22" viewBox="0 0 22 22"><rect x="4" y="4" width="14" height="14" fill="#e2e2e2"/></svg>
<svg class="a" style="left:498px;top:369px" width="22" height="22" viewBox="0 0 22 22"><circle cx="11" cy="11" r="8" fill="#e2e2e2"/></svg>
<svg class="a" style="left:498px;top:399px" width="22" height="22" viewBox="0 0 22 22"><path d="M11 2.500l9 6.500-3.500 10h-11L2 9z" fill="#e2e2e2"/></svg>
<svg class="a" style="left:498px;top:429px" width="22" height="22" viewBox="0 0 22 22"><path d="M11 2l2.600 6.200 6.800.6-5.200 4.400 1.600 6.600-5.800-3.500-5.800 3.500 1.600-6.600L1.600 8.800l6.800-.6z" fill="#e2e2e2"/></svg>
<svg class="a" style="left:498px;top:459px" width="22" height="22" viewBox="0 0 22 22"><path d="M6 17.500a7 7 0 1 1 11-3.500" fill="none" stroke="#e2e2e2" stroke-width="3"/></svg>
<svg class="a" style="left:498px;top:489px" width="22" height="22" viewBox="0 0 22 22"><path d="M11 1.500l2.500 7 7 2.500-7 2.500-2.500 7-2.500-7-7-2.500 7-2.500z" fill="#e2e2e2"/></svg>
<svg class="a" style="left:498px;top:519px" width="22" height="22" viewBox="0 0 22 22"><path d="M9.500 2h3l.5 2.500 1.800.8 2.200-1.500 2.100 2.100-1.500 2.200.8 1.800 2.600.6v3l-2.600.5-.8 1.800 1.500 2.200-2.100 2.100-2.200-1.500-1.800.8-.5 2.600h-3l-.5-2.600-1.800-.8-2.200 1.500-2.100-2.100 1.500-2.200-.8-1.800L1 13.500v-3l2.600-.6.8-1.800-1.500-2.200L5 3.800l2.200 1.500 1.800-.8z" fill="#e2e2e2"/><circle cx="11" cy="11" r="3" fill="#444"/></svg>
<svg class="a" style="left:500px;top:561px" width="18" height="18" viewBox="0 0 18 18"><path d="M3 4l5 5-5 5M10 4l5 5-5 5" fill="none" stroke="#bbb" stroke-width="1.300"/></svg>
<!-- VIEWPORT -->
<div class="tab" style="left:530px;top:85px;width:87px;font-size:13px;letter-spacing:-0.45px;letter-spacing:-0.59px">Composition 4</div>
<div class="a" style="left:530px;top:107px;width:1057px;height:451px;background:#000"></div>
<div class="a" style="left:694px;top:127px;width:728px;height:410px;background:#00aeff"></div>
<div class="a" style="left:1020px;top:278px;width:9px;height:9px;background:#f5e36e"></div>
<div class="t" style="left:1032px;top:274px;font-size:12px;letter-spacing:0;color:#0c1418">Ellipse Shape</div>
<div class="a" style="left:1019px;top:293px;width:78px;height:78px;border-radius:50%;background:#4fa1ff;border:2px solid #1a1e96"></div>
<div class="t" style="left:569.500px;top:458.0px;font-size:12px;font-weight:bold;letter-spacing:-0.90px;color:#f4f4f4">Hold S</div>
<div class="t" style="left:605.8px;top:458.0px;font-size:12.500px;letter-spacing:-0.34px;color:rgba(104,104,112,.68)">Direct Layer Selection</div>
<div class="t" style="left:569.500px;top:471.8px;font-size:12px;font-weight:bold;letter-spacing:-1.24px;color:#f4f4f4">Space</div>
<div class="t" style="left:603.2px;top:471.8px;font-size:12.500px;letter-spacing:-0.49px;color:rgba(104,104,112,.68)">Play/ Stop</div>
<div class="t" style="left:569.500px;top:485.6px;font-size:12px;font-weight:bold;letter-spacing:-0.76px;color:#f4f4f4">Space + click + drag</div>
<div class="t" style="left:674.0px;top:485.6px;font-size:12.500px;letter-spacing:-1.72px;color:rgba(104,104,112,.68)">Pan</div>
<div class="t" style="left:569.500px;top:499.4px;font-size:12px;font-weight:bold;letter-spacing:-0.61px;color:#f4f4f4">Alt + click + drag</div>
<div class="t" style="left:658.4px;top:499.4px;font-size:12.500px;letter-spacing:-0.23px;color:rgba(104,104,112,.68)">Move Pivot Point</div>
<div class="t" style="left:569.500px;top:513.2px;font-size:12px;font-weight:bold;letter-spacing:-0.62px;color:#f4f4f4">Shift</div>
<div class="t" style="left:596.7px;top:513.2px;font-size:12.500px;letter-spacing:-0.66px;color:rgba(104,104,112,.68)">Enable Snapping</div>
<div class="t" style="left:997px;top:535px;color:#fff;font-size:13px;letter-spacing:-0.45px;letter-spacing:-0.35px">Viewport Quality: High</div>
<div class="pn" style="left:530px;top:558px;width:1057px;height:22px"></div>
<div class="a" style="left:535px;top:561px;width:78px;height:16px;background:#282828;border-radius:2px"></div>
<div class="t" style="left:539px;top:561px;font-size:13px;letter-spacing:-0.45px;letter-spacing:-1.01px">38%</div>
<div class="chev" style="left:600px;top:564px"></div>
<div class="a" style="left:866px;top:560px;width:19px;height:18px;background:#2b2b2b;border-radius:3px;box-shadow:0 0 0 1px #3a3a3a"><svg style="position:absolute;left:0;top:0" width="19" height="18" viewBox="0 0 19 18"><path d="M5 4v10" stroke="#e8e8e8" stroke-width="1.600"/><path d="M15 4v10L7 9z" fill="#e8e8e8"/></svg></div>
<div class="a" style="left:887px;top:560px;width:19px;height:18px;background:#2b2b2b;border-radius:3px;box-shadow:0 0 0 1px #3a3a3a"><svg style="position:absolute;left:0;top:0" width="19" height="18" viewBox="0 0 19 18"><path d="M11.500 4v10L3.500 9z" fill="#e8e8e8"/><path d="M14 4v10" stroke="#e8e8e8" stroke-width="1.600"/></svg></div>
<div class="a" style="left:907px;top:560px;width:18px;height:18px;background:#2b2b2b;border-radius:3px;box-shadow:0 0 0 1px #3a3a3a"><svg style="position:absolute;left:0;top:0" width="18" height="18" viewBox="0 0 18 18"><path d="M5 4v10l9-5z" fill="#e8e8e8"/></svg></div>
<div class="a" style="left:926px;top:560px;width:19px;height:18px;background:#2b2b2b;border-radius:3px;box-shadow:0 0 0 1px #3a3a3a"><svg style="position:absolute;left:0;top:0" width="19" height="18" viewBox="0 0 19 18"><path d="M5 4v10" stroke="#e8e8e8" stroke-width="1.600"/><path d="M7.500 4v10l8-5z" fill="#e8e8e8"/></svg></div>
<div class="a" style="left:947px;top:560px;width:19px;height:18px;background:#2b2b2b;border-radius:3px;box-shadow:0 0 0 1px #3a3a3a"><svg style="position:absolute;left:0;top:0" width="19" height="18" viewBox="0 0 19 18"><path d="M4 4v10l8-5z" fill="#e8e8e8"/><path d="M14 4v10" stroke="#e8e8e8" stroke-width="1.600"/></svg></div>
<div class="a" style="left:971px;top:560px;width:20px;height:18px;background:#2b2b2b;border-radius:3px;box-shadow:0 0 0 1px #3a3a3a"><svg style="position:absolute;left:0;top:0" width="20" height="18" viewBox="0 0 20 18"><rect x="4" y="6" width="12" height="8" rx="1.500" fill="none" stroke="#e8e8e8" stroke-width="1.400"/><path d="M9 3.500h5v4" fill="none" stroke="#e8e8e8" stroke-width="1.300"/><path d="M12 1.500l2.500 2-2.500 2z" fill="#e8e8e8"/></svg></div>
<div class="a" style="left:1232px;top:560px;width:37px;height:18px;background:#2b2b2b;border-radius:3px"></div>
<svg class="a" style="left:1234px;top:564px" width="14" height="10" viewBox="0 0 16 12"><path d="M4.500 1H15v10H4.500L0.500 6z" fill="#e8e8e8"/><circle cx="5" cy="6" r="1.600" fill="#2b2b2b"/></svg>
<div class="t" style="left:1257px;top:561px;color:#999;font-size:13px;letter-spacing:-0.45px;">0</div>
<div class="a" style="left:1272px;top:560px;width:30px;height:18px;background:#2b2b2b;border-radius:3px;box-shadow:0 0 0 1px #3a3a3a"><svg style="position:absolute;left:0;top:0" width="30" height="18" viewBox="0 0 30 18"><path d="M5 7h3l4-3.500v11L8 11H5z" fill="#2fd673"/><path d="M13.500 6.500a3.500 3.500 0 0 1 0 5M15 4.500a6 6 0 0 1 0 9" fill="none" stroke="#2fd673" stroke-width="1.200"/></svg></div>
<svg class="a" style="left:1294px;top:565px" width="6" height="8" viewBox="0 0 6 8"><path d="M0.500 0.500v7l5-3.500z" fill="none" stroke="#999" stroke-width=".9"/></svg>
<div class="a" style="left:1307px;top:560px;width:30px;height:18px;background:#2b2b2b;border-radius:3px;box-shadow:0 0 0 1px #3a3a3a"><svg style="position:absolute;left:0;top:0" width="30" height="18" viewBox="0 0 30 18"><path d="M5.500 14.500l-1.500-5a5 5 0 0 1 9-3.500l2.500 4-2.500 1.500-2.500-4a2 2 0 0 0-3.500 1.500l1.500 4.500z" fill="#e8e8e8"/></svg></div>
<svg class="a" style="left:1330px;top:565px" width="6" height="8" viewBox="0 0 6 8"><path d="M0.500 0.500v7l5-3.500z" fill="none" stroke="#999" stroke-width=".9"/></svg>
<div class="a" style="left:1342px;top:560px;width:30px;height:18px;background:#2b2b2b;border-radius:3px;box-shadow:0 0 0 1px #3a3a3a"><svg style="position:absolute;left:0;top:0" width="30" height="18" viewBox="0 0 30 18"><path d="M7 2v14M13 2v14M3 6h14M3 12h14" stroke="#e8e8e8" stroke-width="1.300"/></svg></div>
<svg class="a" style="left:1365px;top:565px" width="6" height="8" viewBox="0 0 6 8"><path d="M0.500 0.500v7l5-3.500z" fill="none" stroke="#999" stroke-width=".9"/></svg>
<div class="a" style="left:1377px;top:560px;width:20px;height:18px;background:#2b2b2b;border-radius:3px;box-shadow:0 0 0 1px #3a3a3a"><svg style="position:absolute;left:0;top:0" width="20" height="18" viewBox="0 0 20 18"><rect x="2.500" y="3" width="4" height="4" fill="#2fd673"/><rect x="2.500" y="9" width="4" height="6" fill="#2fd673"/><rect x="8.500" y="3.500" width="9" height="4" fill="none" stroke="#2fd673" stroke-width="1.300"/><rect x="8" y="10" width="10" height="5" fill="#2fd673"/></svg></div>
<div class="a" style="left:1400px;top:560px;width:19px;height:18px;background:#2b2b2b;border-radius:3px;box-shadow:0 0 0 1px #3a3a3a"><svg style="position:absolute;left:0;top:0" width="19" height="18" viewBox="0 0 19 18"><path d="M2 4l4.500 5L2 14M7 4l4.500 5L7 14M12 4l4.500 5-4.500 5" fill="none" stroke="#e8e8e8" stroke-width="1.500"/></svg></div>
<div class="a" style="left:1423px;top:560px;width:30px;height:18px;background:#2b2b2b;border-radius:3px;box-shadow:0 0 0 1px #3a3a3a"><svg style="position:absolute;left:0;top:0" width="30" height="18" viewBox="0 0 30 18"><rect x="3" y="3.500" width="13" height="9" fill="none" stroke="#e8e8e8" stroke-width="1.300"/><rect x="2.500" y="12" width="14" height="3" fill="#e8e8e8"/></svg></div>
<svg class="a" style="left:1446px;top:565px" width="6" height="8" viewBox="0 0 6 8"><path d="M0.500 0.500v7l5-3.500z" fill="none" stroke="#999" stroke-width=".9"/></svg>
<div class="a" style="left:1458px;top:560px;width:30px;height:18px;background:#2b2b2b;border-radius:3px;box-shadow:0 0 0 1px #3a3a3a"><svg style="position:absolute;left:0;top:0" width="30" height="18" viewBox="0 0 30 18"><rect x="3" y="3" width="9" height="6" fill="none" stroke="#aaa" stroke-width="1.100"/><rect x="5.500" y="5.500" width="9" height="6" fill="#2b2b2b" stroke="#aaa" stroke-width="1.100"/><rect x="8" y="8" width="9" height="6" fill="#2b2b2b" stroke="#aaa" stroke-width="1.100"/></svg></div>
<svg class="a" style="left:1481px;top:565px" width="6" height="8" viewBox="0 0 6 8"><path d="M0.500 0.500v7l5-3.500z" fill="none" stroke="#999" stroke-width=".9"/></svg>
<div class="a" style="left:1494px;top:560px;width:30px;height:18px;background:#2b2b2b;border-radius:3px;box-shadow:0 0 0 1px #3a3a3a"><svg style="position:absolute;left:0;top:0" width="30" height="18" viewBox="0 0 30 18"><rect x="3" y="3" width="9" height="9" fill="#ccc"/><rect x="7.500" y="7.500" width="8" height="8" fill="#2b2b2b" stroke="#ddd" stroke-width="1.200"/></svg></div>
<svg class="a" style="left:1516px;top:565px" width="6" height="8" viewBox="0 0 6 8"><path d="M0.500 0.500v7l5-3.500z" fill="none" stroke="#999" stroke-width=".9"/></svg>
<div class="a" style="left:1529px;top:560px;width:30px;height:18px;background:#2b2b2b;border-radius:3px;box-shadow:0 0 0 1px #3a3a3a"><svg style="position:absolute;left:0;top:0" width="30" height="18" viewBox="0 0 30 18"><g fill="#2fd673"><rect x="3" y="3" width="3" height="3"/><rect x="9" y="3" width="3" height="3"/><rect x="6" y="6" width="3" height="3"/><rect x="12" y="6" width="3" height="3"/><rect x="3" y="9" width="3" height="3"/><rect x="9" y="9" width="3" height="3"/><rect x="6" y="12" width="3" height="3"/><rect x="12" y="12" width="3" height="3"/></g></svg></div>
<svg class="a" style="left:1551px;top:565px" width="6" height="8" viewBox="0 0 6 8"><path d="M0.500 0.500v7l5-3.500z" fill="none" stroke="#999" stroke-width=".9"/></svg>
<div class="a" style="left:1564px;top:560px;width:19px;height:18px;background:#2b2b2b;border-radius:3px;box-shadow:0 0 0 1px #3a3a3a"><svg style="position:absolute;left:0;top:0" width="19" height="18" viewBox="0 0 19 18"><g transform="translate(1.500,1) scale(.73)"><path d="M9.500 2h3l.5 2.500 1.800.8 2.200-1.500 2.100 2.100-1.500 2.200.8 1.800 2.600.6v3l-2.600.5-.8 1.800 1.500 2.200-2.100 2.100-2.200-1.500-1.800.8-.5 2.600h-3l-.5-2.600-1.800-.8-2.200 1.500-2.100-2.100 1.500-2.200-.8-1.800L1 13.500v-3l2.600-.6.8-1.800-1.500-2.200L5 3.800l2.200 1.500 1.800-.8z" fill="#e8e8e8"/><circle cx="11" cy="11" r="3.200" fill="#2b2b2b"/></g></svg></div>
<!-- COLOR PANEL -->
<div class="tab" style="left:1593px;top:85px;width:40px;font-size:13px;letter-spacing:-0.45px;letter-spacing:-0.49px">Color</div>
<div class="tab off" style="left:1634px;top:85px;width:69px;padding:0 5px;font-size:13px;letter-spacing:-0.45px;letter-spacing:-0.84px">Add Layers</div>
<div class="pn" style="left:1593px;top:107px;width:307px;height:376px;overflow:hidden">
<div class="a" style="left:53px;top:-47px;width:200px;height:200px;border-radius:50%;background:conic-gradient(from 90deg,#f00,#f0f,#00f,#0ff,#0f0,#ff0,#f00)"></div>
<div class="a" style="left:78px;top:-22px;width:150px;height:150px;border-radius:50%;background:#444"></div>
<div class="a" style="left:109px;top:9px;width:90px;height:90px;background:linear-gradient(to right,#000,rgba(0,0,0,0)),linear-gradient(to bottom,#fff,#1b00ff)"></div>
<div class="a" style="left:192px;top:63px;width:13px;height:13px;border-radius:50%;border:1.300px solid #eee"></div>
<div class="a" style="left:111px;top:126px;width:13px;height:13px;border-radius:50%;border:1.300px solid #eee"></div>
</div>
<div class="a" style="left:1900px;top:107px;width:14px;height:376px;background:#2a2a2a"></div>
<div class="a" style="left:1902px;top:153px;width:10px;height:302px;background:#4d4d4d;border-radius:5px"></div>
<div class="a" style="left:1600px;top:274px;width:21px;height:21px;background:#6755ff;border-radius:3px"></div>
<div class="t" style="left:1625px;top:276px;font-size:13px;letter-spacing:-0.45px;letter-spacing:-0.70px">Medium Slateblue</div>
<div class="btn" style="left:1871px;top:273px;width:22px;height:22px;background:#2b2b2b;border-color:#222"></div>
<svg class="a" style="left:1876px;top:278px" width="13" height="13" viewBox="0 0 13 13"><path d="M8.500 1l3.500 3.500-1.500 1.500-.7-.7L4 11l-3 1.500L2.500 9.500 8.200 3.800 7.500 3z" fill="#d8d8d8"/><path d="M9.500 0.500l3 3" stroke="#d8d8d8" stroke-width="2.500"/></svg>
<div class="a" style="left:1600px;top:301px;width:50px;height:17px;background:#4e4e4e;border:1px solid #5c5c5c;border-radius:2px"></div>
<div class="t" style="left:1603px;top:301px;font-size:13px;letter-spacing:-0.45px;letter-spacing:-1.06px">Hex</div>
<div class="chev" style="left:1637px;top:304px"></div>
<div class="inp" style="left:1653px;top:299px;width:240px;height:20px"></div>
<div class="t" style="left:1658px;top:301px;color:#555;font-size:13px;letter-spacing:-0.45px;">#</div>
<div class="t" style="left:1670px;top:301px;font-size:13px;letter-spacing:-0.45px;letter-spacing:-0.10px">6755ff</div>
<div class="a" style="left:1600px;top:330px;width:234px;height:4px;background:#dcdcdc;border-radius:2px"></div>
<div class="a" style="left:1828px;top:327px;width:11px;height:11px;border-radius:50%;background:#6cc5a8;border:2px solid #5ab093"></div>
<div class="inp" style="left:1849px;top:324px;width:44px;height:16px"></div>
<div class="t" style="left:1854px;top:324px;color:#555;font-size:13px;letter-spacing:-0.45px;">A</div>
<div class="t" style="left:1866px;top:324px;font-size:13px;letter-spacing:-0.45px;letter-spacing:-0.75px">255</div>
<div class="a" style="left:1597px;top:346px;width:299px;height:22px;background:#2b2b2b"></div>
<div class="a" style="left:1599px;top:348px;width:148px;height:20px;background:#444;border-radius:4px 4px 0 0"></div>
<div class="t" style="left:1599px;top:349px;width:148px;text-align:center;font-size:13px;letter-spacing:-0.45px;letter-spacing:-0.99px">Swatches</div>
<div class="t" style="left:1747px;top:349px;width:148px;text-align:center;color:#bbb;font-size:13px;letter-spacing:-0.45px;letter-spacing:-0.49px">Generator</div>
<div class="a" style="left:1598px;top:371px;width:257px;height:18px;background:#555;border-radius:3px"></div>
<div class="a" style="left:1599px;top:372px;width:62px;height:16px;background:#2b2b2b;border-radius:2px"></div>
<svg class="a" style="left:1605px;top:375px" width="12" height="10" viewBox="0 0 12 10"><path d="M1 0v10M4 0v10M7 0l3.500 10" stroke="#2fd673" stroke-width="1.600"/></svg>
<div class="t" style="left:1621px;top:372px;font-size:13px;letter-spacing:-0.45px;letter-spacing:-0.46px">Library</div>
<svg class="a" style="left:1670px;top:375px" width="11" height="10" viewBox="0 0 11 10"><path d="M0 0h4l1 1.500h6V10H0z" fill="#ddd"/><path d="M2 4.500h7M2 7h7M4 3.500v5" stroke="#555" stroke-width=".9"/></svg>
<div class="t" style="left:1686px;top:372px;font-size:13px;letter-spacing:-0.45px;letter-spacing:-0.49px">Project</div>
<svg class="a" style="left:1738px;top:374px" width="9" height="11" viewBox="0 0 9 11"><path d="M0.600 0.600h4.900l2.900 2.900v6.900H0.600z" fill="none" stroke="#ddd" stroke-width="1.200"/><path d="M5.500 0.600v2.900h2.900" fill="none" stroke="#ddd" stroke-width="1"/></svg>
<div class="t" style="left:1752px;top:372px;font-size:13px;letter-spacing:-0.45px;letter-spacing:-1.47px">Scene</div>
<svg class="a" style="left:1800px;top:375px" width="11" height="10" viewBox="0 0 11 10"><path d="M3 0.600h7.400v5L6.500 9.400H3A2.400 2.400 0 0 1 .6 7V3A2.400 2.400 0 0 1 3 .6z" fill="none" stroke="#ddd" stroke-width="1.200"/><path d="M10.400 5.600H8a1.500 1.500 0 0 0-1.500 1.500v2.300" fill="none" stroke="#ddd" stroke-width="1"/></svg>
<div class="t" style="left:1816px;top:372px;font-size:13px;letter-spacing:-0.45px;letter-spacing:-1.10px">Labels</div>
<div class="a" style="left:1858px;top:371px;width:37px;height:18px;background:#555;border-radius:3px"></div>
<div class="a" style="left:1859px;top:372px;width:17px;height:16px;background:#2b2b2b;border-radius:2px"></div>
<svg class="a" style="left:1862px;top:375px" width="10" height="10" viewBox="0 0 10 10"><g fill="#2fd673"><rect width="4" height="4"/><rect x="6" width="4" height="4"/><rect y="6" width="4" height="4"/><rect x="6" y="6" width="4" height="4"/></g></svg>
<svg class="a" style="left:1881px;top:375px" width="11" height="10" viewBox="0 0 11 10"><path d="M0 1h11M0 5h11M0 9h11" stroke="#ddd" stroke-width="1.300"/></svg>
<div class="a" style="left:1598px;top:393px;width:275px;height:16px;background:#4a4a4a;border:1px solid #555;border-radius:2px"></div>
<div class="t" style="left:1601px;top:393px;font-size:13px;letter-spacing:-0.45px;letter-spacing:-1.27px">new</div>
<div class="chev" style="left:1861px;top:395px"></div>
<div class="a" style="left:1880px;top:400px;width:2px;height:2px;background:#ddd;box-shadow:5px 0 0 #ddd,10px 0 0 #ddd"></div>
<div class="a" style="left:1598px;top:410px;width:298px;height:73px;background:#262626"></div>
<div class="sq" style="left:1600px;background:#9146ff"></div>
<div class="sq" style="left:1622px;background:#4fa0ff"></div>
<div class="sq" style="left:1644px;background:#ff7a4f"></div>
<div class="sq" style="left:1666px;background:#4fffb0"></div>
<div class="sq" style="left:1688px;background:#ff4f5e"></div>
<div class="sq" style="left:1710px;background:#ff4fc0"></div>
<div class="sq" style="left:1732px;background:#ffd24f"></div>
<div class="sq" style="left:1754px;background:#4064d8"></div>
<div class="sq" style="left:1776px;background:#5ce0d0"></div>
<div class="sq" style="left:1798px;background:#d87ed8"></div>
<div class="sq" style="left:1820px;background:#b0ec8c"></div>
<div class="sq" style="left:1842px;background:#6755ff"></div>
<!-- ALIGN PANEL -->
<div class="tab" style="left:1593px;top:490px;width:38px;font-size:13px;letter-spacing:-0.45px;letter-spacing:-0.48px">Align</div>
<div class="pn" style="left:1593px;top:512px;width:321px;height:67px"></div>
<div class="t" style="left:1601px;top:523px;font-size:13px;letter-spacing:-0.45px;letter-spacing:-0.56px">Alignment</div>
<div class="t" style="left:1601px;top:551px;font-size:13px;letter-spacing:-0.45px;letter-spacing:-0.18px">Distribution</div>
<div class="a" style="left:1791px;top:523px;width:17px;height:17px;background:#2b2b2b;border-radius:3px;box-shadow:0 0 0 1px #3a3a3a"><svg style="position:absolute;left:0;top:0" width="17" height="17" viewBox="0 0 17 17"><path d="M3 3v11M5.500 6h5M5.500 11h8" stroke="#e8e8e8" stroke-width="1.300" fill="none"/></svg></div>
<div class="a" style="left:1809px;top:523px;width:17px;height:17px;background:#2b2b2b;border-radius:3px;box-shadow:0 0 0 1px #3a3a3a"><svg style="position:absolute;left:0;top:0" width="17" height="17" viewBox="0 0 17 17"><path d="M8.500 3v11M5 6h7M3 11h11" stroke="#e8e8e8" stroke-width="1.300" fill="none"/></svg></div>
<div class="a" style="left:1827px;top:523px;width:17px;height:17px;background:#2b2b2b;border-radius:3px;box-shadow:0 0 0 1px #3a3a3a"><svg style="position:absolute;left:0;top:0" width="17" height="17" viewBox="0 0 17 17"><path d="M14 3v11M6.500 6h5M3.500 11h8" stroke="#e8e8e8" stroke-width="1.300" fill="none"/></svg></div>
<div class="a" style="left:1853px;top:523px;width:17px;height:17px;background:#2b2b2b;border-radius:3px;box-shadow:0 0 0 1px #3a3a3a"><svg style="position:absolute;left:0;top:0" width="17" height="17" viewBox="0 0 17 17"><path d="M3 3h11M6 5.500v8M11 5.500v5" stroke="#e8e8e8" stroke-width="1.300" fill="none"/></svg></div>
<div class="a" style="left:1871px;top:523px;width:17px;height:17px;background:#2b2b2b;border-radius:3px;box-shadow:0 0 0 1px #3a3a3a"><svg style="position:absolute;left:0;top:0" width="17" height="17" viewBox="0 0 17 17"><path d="M3 8.500h11M6 3v11M11 5v7" stroke="#e8e8e8" stroke-width="1.300" fill="none"/></svg></div>
<div class="a" style="left:1889px;top:523px;width:17px;height:17px;background:#2b2b2b;border-radius:3px;box-shadow:0 0 0 1px #3a3a3a"><svg style="position:absolute;left:0;top:0" width="17" height="17" viewBox="0 0 17 17"><path d="M3 14h11M6 6.500v5M11 3.500v8" stroke="#e8e8e8" stroke-width="1.300" fill="none"/></svg></div>
<div class="a" style="left:1791px;top:551px;width:17px;height:17px;background:#2b2b2b;border-radius:3px;box-shadow:0 0 0 1px #3a3a3a"><svg style="position:absolute;left:0;top:0" width="17" height="17" viewBox="0 0 17 17"><path d="M3 3v11M8.500 4.500v8" stroke="#e8e8e8" stroke-width="1.300" fill="none"/></svg></div>
<div class="a" style="left:1809px;top:551px;width:17px;height:17px;background:#2b2b2b;border-radius:3px;box-shadow:0 0 0 1px #3a3a3a"><svg style="position:absolute;left:0;top:0" width="17" height="17" viewBox="0 0 17 17"><path d="M3 3h11M3 14h11M5 8.500h7" stroke="#e8e8e8" stroke-width="1.300" fill="none"/></svg></div>
<div class="a" style="left:1827px;top:551px;width:17px;height:17px;background:#2b2b2b;border-radius:3px;box-shadow:0 0 0 1px #3a3a3a"><svg style="position:absolute;left:0;top:0" width="17" height="17" viewBox="0 0 17 17"><path d="M2.500 5V2.500H5M12 2.500h2.500V5M14.500 12v2.500H12M5 14.500H2.500V12" stroke="#e8e8e8" stroke-width="1" fill="none"/><rect x="5" y="9" width="2.500" height="2.500" fill="#e8e8e8"/><rect x="9.500" y="5.500" width="2.500" height="2.500" fill="#e8e8e8"/></svg></div>
<!-- SCENE WINDOW -->
<div class="tab" style="left:494px;top:586px;width:89px;padding:0 5px;font-size:13px;letter-spacing:-0.45px;letter-spacing:-0.79px">Scene Window</div>
<div class="tab off" style="left:584px;top:586px;width:100px;padding:0 5px;font-size:13px;letter-spacing:-0.45px;letter-spacing:-0.61px">JavaScript Editor</div>
<div class="tab off" style="left:685px;top:586px;width:112px;padding:0 5px;font-size:13px;letter-spacing:-0.45px;letter-spacing:-0.78px">Dependency Graph</div>
<div class="a" style="left:494px;top:608px;width:1420px;height:22px;background:#262626"></div>
<div class="t" style="left:565px;top:612px;width:200px;text-align:center;color:#b4b4b4;font-size:13px;letter-spacing:-0.45px;letter-spacing:-0.59px">Composition 1</div>
<svg class="a" style="left:835px;top:616px" width="8" height="8" viewBox="0 0 8 8"><path d="M0.500 0.500l7 7M7.500 0.500l-7 7" stroke="#aaa" stroke-width="1.100"/></svg>
<div class="t" style="left:850px;top:611px;color:#aaa;font-size:13px;letter-spacing:-0.45px;">|</div>
<div class="t" style="left:979px;top:612px;color:#b4b4b4;font-size:13px;letter-spacing:-0.45px;letter-spacing:-0.59px">Composition 2</div>
<svg class="a" style="left:1187px;top:616px" width="8" height="8" viewBox="0 0 8 8"><path d="M0.500 0.500l7 7M7.500 0.500l-7 7" stroke="#aaa" stroke-width="1.100"/></svg>
<div class="t" style="left:1202px;top:611px;color:#aaa;font-size:13px;letter-spacing:-0.45px;">|</div>
<div class="t" style="left:1270px;top:612px;width:200px;text-align:center;color:#b4b4b4;font-size:13px;letter-spacing:-0.45px;letter-spacing:-0.59px">Composition 3</div>
<svg class="a" style="left:1540px;top:616px" width="8" height="8" viewBox="0 0 8 8"><path d="M0.500 0.500l7 7M7.500 0.500l-7 7" stroke="#aaa" stroke-width="1.100"/></svg>
<div class="a" style="left:1557px;top:610px;width:352px;height:20px;background:#444;border-radius:4px 4px 0 0"></div>
<div class="t" style="left:1557px;top:612px;width:330px;text-align:center;font-size:13px;letter-spacing:-0.45px;letter-spacing:-0.59px">Composition 4</div>
<svg class="a" style="left:1892px;top:616px" width="8" height="8" viewBox="0 0 8 8"><path d="M0.500 0.500l7 7M7.500 0.500l-7 7" stroke="#ccc" stroke-width="1.100"/></svg>
<div class="pn" style="left:494px;top:630px;width:464px;height:43px"></div>
<div class="a" style="left:496px;top:632px;width:255px;height:20px;background:#262626;border-radius:10px"></div>
<svg class="a" style="left:499px;top:635px" width="15" height="15" viewBox="0 0 15 15"><circle cx="6.500" cy="6.500" r="5" fill="none" stroke="#e8e8e8" stroke-width="1.200"/><path d="M10.200 10.200l3 3" stroke="#e8e8e8" stroke-width="1.600"/></svg>
<div class="t dim" style="left:520px;top:634px;font-size:13px;letter-spacing:-0.45px;letter-spacing:-0.76px">Enter a layer name</div>
<div class="btn" style="left:753px;top:632px;width:20px;height:20px;background:#2b2b2b;border-color:#222"></div>
<svg class="a" style="left:757px;top:636px" width="14" height="14" viewBox="0 0 14 14"><path d="M5.500 0.500v10M0.500 5.500h10" stroke="#eee" stroke-width="1.600"/><path d="M11 14l3-3v3z" fill="#3ddc84"/></svg>
<div class="btn" style="left:797px;top:632px;width:20px;height:20px;background:#2b2b2b;border-color:#222"></div>
<div class="btn" style="left:819px;top:632px;width:20px;height:20px;background:#2b2b2b;border-color:#222"></div>
<div class="btn" style="left:841px;top:632px;width:20px;height:20px;background:#2b2b2b;border-color:#222"></div>
<div class="a" style="left:798px;top:633px;width:18px;height:18px;background:#555;border-radius:3px"></div>
<svg class="a" style="left:799px;top:634px" width="16" height="16" viewBox="0 0 16 16"><circle cx="5" cy="11" r="3.500" fill="#777"/><circle cx="7" cy="9" r="3.800" fill="#999"/><circle cx="9.500" cy="6.500" r="4.200" fill="#e0e0e0"/></svg>
<svg class="a" style="left:822px;top:635px" width="15" height="15" viewBox="0 0 15 15"><path d="M9 4.500l1.100 3 3 1.100-3 1.100-1.100 3-1.100-3-3-1.100 3-1.100z" fill="#ddd"/><circle cx="3" cy="3" r="1.100" fill="#ddd"/><circle cx="8" cy="2" r="1" fill="#ddd"/><circle cx="2.500" cy="8" r="1" fill="#ddd"/><path d="M12 15l3-3v3z" fill="#3ddc84"/></svg>
<svg class="a" style="left:844px;top:635px" width="15" height="15" viewBox="0 0 15 15"><path d="M0 2.500h14M0 7.500h14M0 12.500h14" stroke="#ddd" stroke-width="1" stroke-dasharray="3 1.500"/><circle cx="9" cy="2.500" r="1.800" fill="#2b2b2b" stroke="#ddd"/><circle cx="5" cy="7.500" r="1.800" fill="#2b2b2b" stroke="#ddd"/><circle cx="9" cy="12.500" r="1.800" fill="#2b2b2b" stroke="#ddd"/><path d="M12 15l3-3v3z" fill="#3ddc84"/></svg>
<div class="inp" style="left:863px;top:632px;width:94px;height:20px"></div>
<div class="t" style="left:868px;top:634px;color:#555;font-size:13px;letter-spacing:-0.45px;">F</div>
<div class="t" style="left:880px;top:634px;font-size:13px;letter-spacing:-0.45px;letter-spacing:-1.96px">77</div>
<svg class="a" style="left:500px;top:657px" width="10" height="12" viewBox="0 0 10 12"><path d="M2.500 5V3.500a2.500 2.500 0 0 1 5 0V5" fill="none" stroke="#d8d8d8" stroke-width="1.400"/><rect x="0.500" y="5" width="9" height="6.500" rx="1" fill="#d8d8d8"/><rect x="4" y="7.500" width="2" height="2" fill="#444"/></svg>
<svg class="a" style="left:517px;top:658px" width="14" height="10" viewBox="0 0 14 10"><path d="M0.600 5C3 1 11 1 13.400 5 11 9 3 9 .6 5z" fill="none" stroke="#d8d8d8" stroke-width="1.100"/><circle cx="7" cy="5" r="1.900" fill="#d8d8d8"/></svg>
<svg class="a" style="left:537px;top:656px" width="13" height="14" viewBox="0 0 13 14"><path d="M6.500 0.700l5.600 3v6.600l-5.600 3-5.600-3V3.700zM.9 3.700l5.600 3 5.600-3M6.500 6.700v6.600" fill="none" stroke="#d8d8d8" stroke-width="1.100"/></svg>
<svg class="a" style="left:555px;top:657px" width="15" height="12" viewBox="0 0 15 12"><path d="M0.500 4h3l4-3.500v11L3.500 8H.5z" fill="#d8d8d8"/><path d="M9.500 3.500a3.500 3.500 0 0 1 0 5M11.500 1.500a6 6 0 0 1 0 9" fill="none" stroke="#d8d8d8" stroke-width="1.200"/></svg>
<svg class="a" style="left:575px;top:656px" width="13" height="13" viewBox="0 0 13 13"><path d="M1 12l.8-2.300L7.300 4.200l1.500 1.500-5.500 5.500z" fill="none" stroke="#bbb" stroke-width="1"/><path d="M6.300 3.200l3.500 3.500" stroke="#bbb" stroke-width="1.600"/><path d="M8.800 4.200l2-2" stroke="#bbb" stroke-width="3.200" stroke-linecap="round"/></svg>
<svg class="a" style="left:593px;top:659px" width="14" height="9" viewBox="0 0 14 9"><path d="M4 0.500h9.500v8H4L0.500 4.500z" fill="#d8d8d8"/><circle cx="4.500" cy="4.500" r="1.400" fill="#464646"/></svg>
<div class="t" style="left:649px;top:656px;font-size:13px;letter-spacing:-0.45px;letter-spacing:-1.26px">Name</div>
<div class="a" style="left:494px;top:673px;width:452px;height:110px;background:#383838"></div>
<div class="a" style="left:494px;top:783px;width:452px;height:179px;background:#282828"></div>
<div class="a" style="left:946px;top:673px;width:12px;height:303px;background:#282828"></div>
<div class="a" style="left:947px;top:673px;width:10px;height:287px;background:#4d4d4d;border-radius:5px"></div>
<div class="a" style="left:494px;top:962px;width:452px;height:14px;background:#282828"></div>
<div class="a" style="left:495px;top:964px;width:449px;height:10px;background:#4d4d4d;border-radius:5px"></div>
<div class="a" style="left:496px;top:717px;width:447px;height:20px;background:#51573f;border-radius:3px"></div>
<div class="a" style="left:496px;top:674px;width:18px;height:18px;background:#2d2d2d;border-radius:2px"></div>
<div class="a" style="left:515px;top:674px;width:18px;height:18px;background:#2d2d2d;border-radius:2px"></div>
<svg class="a" style="left:517px;top:676px" width="13" height="13" viewBox="0 0 13 13"><path d="M11 6.500a4.800 4.800 0 1 1-2.500-4.200" fill="none" stroke="#e0e0e0" stroke-width="1.200"/><path d="M3.800 6.200 6.200 8.600 11.500 2" fill="none" stroke="#e0e0e0" stroke-width="1.300"/></svg>
<div class="sw" style="left:573px;top:675px;background:#6fe0a0"></div>
<svg class="a" style="left:593px;top:678px" width="14" height="9" viewBox="0 0 14 9"><path d="M4 0.500h9.500v8H4L0.500 4.500z" fill="#d8d8d8"/><circle cx="4.500" cy="4.500" r="1.400" fill="#383838"/></svg>
<div class="a" style="left:610px;top:675px;width:31px;height:16px;background:#3f3f3f;border-radius:2px"></div>
<div class="chev" style="left:615px;top:679px;width:5px;height:5px;border-color:#aaa"></div>
<svg class="a" style="left:649px;top:675px" width="15" height="15" viewBox="0 0 15 15"><path d="M6 1.500h8M6 4.500h8M9 7.500h5" stroke="#e4e4e4" stroke-width="1"/><path d="M0 6h5v4h4v5H0z" fill="#a8d4ff"/></svg>
<div class="t" style="left:667px;top:675px;font-size:13px;letter-spacing:-0.45px;letter-spacing:-0.40px">Color Array</div>
<div class="a" style="left:905px;top:675px;width:22px;height:16px;background:#2d2d2d;border-radius:3px"></div>
<svg class="a" style="left:908px;top:679px" width="7" height="8" viewBox="0 0 7 8"><path d="M7 0.500H4L0 4l4 3.500h3z" fill="#e3c46a"/></svg>
<svg class="a" style="left:918px;top:679px" width="7" height="8" viewBox="0 0 7 8"><path d="M0 0.500h3l4 3.500-4 3.500H0z" fill="#d050f0"/></svg>
<div class="ring" style="left:931px;top:678px;border-color:#999"></div>
<div class="a" style="left:496px;top:696px;width:18px;height:18px;background:#2d2d2d;border-radius:2px"></div>
<div class="a" style="left:515px;top:696px;width:18px;height:18px;background:#2d2d2d;border-radius:2px"></div>
<svg class="a" style="left:517px;top:698px" width="13" height="13" viewBox="0 0 13 13"><path d="M11 6.500a4.800 4.800 0 1 1-2.500-4.200" fill="none" stroke="#e0e0e0" stroke-width="1.200"/><path d="M3.800 6.200 6.200 8.600 11.500 2" fill="none" stroke="#e0e0e0" stroke-width="1.300"/></svg>
<div class="sw" style="left:573px;top:697px;background:#cdf07c"></div>
<svg class="a" style="left:593px;top:700px" width="14" height="9" viewBox="0 0 14 9"><path d="M4 0.500h9.500v8H4L0.500 4.500z" fill="#d8d8d8"/><circle cx="4.500" cy="4.500" r="1.400" fill="#383838"/></svg>
<svg class="a" style="left:667px;top:698px" width="15" height="14" viewBox="0 0 15 14"><g stroke="#3ddc84" stroke-width="1.100"><path d="M1 1l2.500 2.500M3.500 1L1 3.500M10 0.500l2.500 2.500M12.500 0.500L10 3M5.500 4.500L8 7M8 4.500L5.500 7M1.500 9.500L4 12M4 9.500L1.500 12M11 8l3 3M14 8l-3 3"/></g></svg>
<div class="t" style="left:686px;top:697px;font-size:13px;letter-spacing:-0.45px;letter-spacing:-0.75px">Random [Index]</div>
<div class="a" style="left:905px;top:697px;width:22px;height:16px;background:#2d2d2d;border-radius:3px"></div>
<svg class="a" style="left:908px;top:701px" width="7" height="8" viewBox="0 0 7 8"><path d="M7 0.500H4L0 4l4 3.500h3z" fill="#777"/></svg>
<svg class="a" style="left:918px;top:701px" width="7" height="8" viewBox="0 0 7 8"><path d="M0 0.500h3l4 3.500-4 3.500H0z" fill="#d050f0"/></svg>
<div class="ring" style="left:931px;top:700px;border-color:#999"></div>
<div class="a" style="left:496px;top:718px;width:18px;height:18px;background:#2d2d2d;border-radius:2px"></div>
<div class="a" style="left:515px;top:718px;width:18px;height:18px;background:#2d2d2d;border-radius:2px"></div>
<svg class="a" style="left:517px;top:720px" width="13" height="13" viewBox="0 0 13 13"><path d="M11 6.500a4.800 4.800 0 1 1-2.500-4.200" fill="none" stroke="#e0e0e0" stroke-width="1.200"/><path d="M3.800 6.200 6.200 8.600 11.500 2" fill="none" stroke="#e0e0e0" stroke-width="1.300"/></svg>
<div class="sw" style="left:573px;top:719px;background:#cdf07c"></div>
<svg class="a" style="left:593px;top:722px" width="14" height="9" viewBox="0 0 14 9"><path d="M4 0.500h9.500v8H4L0.500 4.500z" fill="#d8d8d8"/><circle cx="4.500" cy="4.500" r="1.400" fill="#51573f"/></svg>
<svg class="a" style="left:646px;top:721px" width="19" height="13" viewBox="0 0 19 13"><path d="M0.500 6.500c1.500-5.500 3-5.500 4.500 0s3 5.500 4.500 0 3-5.500 4.500 0 3 5.500 4.500 0" fill="none" stroke="#3ddc84" stroke-width="1.200"/></svg>
<div class="t" style="left:667px;top:719px;font-size:13px;letter-spacing:-0.45px;letter-spacing:-0.51px">Oscillator [Position.Z] Cosine</div>
<div class="a" style="left:905px;top:719px;width:22px;height:16px;background:#2d2d2d;border-radius:3px"></div>
<svg class="a" style="left:908px;top:723px" width="7" height="8" viewBox="0 0 7 8"><path d="M7 0.500H4L0 4l4 3.500h3z" fill="#777"/></svg>
<svg class="a" style="left:918px;top:723px" width="7" height="8" viewBox="0 0 7 8"><path d="M0 0.500h3l4 3.500-4 3.500H0z" fill="#d050f0"/></svg>
<div class="ring" style="left:931px;top:722px;border-color:#666"></div>
<div class="a" style="left:496px;top:740px;width:18px;height:18px;background:#2d2d2d;border-radius:2px"></div>
<div class="a" style="left:515px;top:740px;width:18px;height:18px;background:#2d2d2d;border-radius:2px"></div>
<svg class="a" style="left:517px;top:742px" width="13" height="13" viewBox="0 0 13 13"><path d="M11 6.500a4.800 4.800 0 1 1-2.500-4.200" fill="none" stroke="#e0e0e0" stroke-width="1.200"/><path d="M3.800 6.200 6.200 8.600 11.500 2" fill="none" stroke="#e0e0e0" stroke-width="1.300"/></svg>
<div class="sw" style="left:573px;top:741px;background:#cdf07c"></div>
<svg class="a" style="left:593px;top:744px" width="14" height="9" viewBox="0 0 14 9"><path d="M4 0.500h9.500v8H4L0.500 4.500z" fill="#d8d8d8"/><circle cx="4.500" cy="4.500" r="1.400" fill="#383838"/></svg>
<svg class="a" style="left:646px;top:743px" width="19" height="13" viewBox="0 0 19 13"><path d="M0.500 6.500c1.500-5.500 3-5.500 4.500 0s3 5.500 4.500 0 3-5.500 4.500 0 3 5.500 4.500 0" fill="none" stroke="#3ddc84" stroke-width="1.200"/></svg>
<div class="t" style="left:667px;top:741px;font-size:13px;letter-spacing:-0.45px;letter-spacing:-0.54px">Oscillator [Position.X] Sine</div>
<div class="a" style="left:905px;top:741px;width:22px;height:16px;background:#2d2d2d;border-radius:3px"></div>
<div class="a" style="left:905px;top:741px;width:11px;height:16px;border:1px solid #e3c46a;border-radius:2px"></div>
<svg class="a" style="left:908px;top:745px" width="7" height="8" viewBox="0 0 7 8"><path d="M7 0.500H4L0 4l4 3.500h3z" fill="#e3c46a"/></svg>
<svg class="a" style="left:918px;top:745px" width="7" height="8" viewBox="0 0 7 8"><path d="M0 0.500h3l4 3.500-4 3.500H0z" fill="#d050f0"/></svg>
<div class="ring" style="left:931px;top:744px;border-color:#999"></div>
<div class="a" style="left:496px;top:762px;width:18px;height:18px;background:#2d2d2d;border-radius:2px"></div>
<div class="a" style="left:515px;top:762px;width:18px;height:18px;background:#2d2d2d;border-radius:2px"></div>
<svg class="a" style="left:517px;top:766px" width="14" height="10" viewBox="0 0 14 10"><path d="M0.600 5C3 1 11 1 13.400 5 11 9 3 9 .6 5z" fill="none" stroke="#d8d8d8" stroke-width="1.100"/><circle cx="7" cy="5" r="1.900" fill="#d8d8d8"/></svg>
<div class="a" style="left:534px;top:762px;width:18px;height:18px;background:#2d2d2d;border-radius:2px"></div>
<div class="sw" style="left:573px;top:763px;background:#ffe680"></div>
<svg class="a" style="left:593px;top:766px" width="14" height="9" viewBox="0 0 14 9"><path d="M4 0.500h9.500v8H4L0.500 4.500z" fill="#d8d8d8"/><circle cx="4.500" cy="4.500" r="1.400" fill="#383838"/></svg>
<svg class="a" style="left:649px;top:764px" width="14" height="14" viewBox="0 0 14 14"><rect x="1" y="1" width="12" height="12" fill="none" stroke="#e8e8e8" stroke-width="1.300" stroke-dasharray="3.500 2.200" stroke-dashoffset="1.700"/></svg>
<div class="t" style="left:667px;top:763px;font-size:13px;letter-spacing:-0.45px;letter-spacing:-0.96px">Ellipse Shape</div>
<div class="a" style="left:905px;top:763px;width:22px;height:16px;background:#2d2d2d;border-radius:3px"></div>
<svg class="a" style="left:908px;top:767px" width="7" height="8" viewBox="0 0 7 8"><path d="M7 0.500H4L0 4l4 3.500h3z" fill="#e3c46a"/></svg>
<svg class="a" style="left:918px;top:767px" width="7" height="8" viewBox="0 0 7 8"><path d="M0 0.500h3l4 3.500-4 3.500H0z" fill="#999"/></svg>
<div class="ring" style="left:931px;top:766px;border-color:#999"></div>
<div class="pn" style="left:494px;top:977px;width:464px;height:21px"></div>
<div class="btn" style="left:497px;top:978px;width:19px;height:19px;background:#2b2b2b;border-color:#222"></div>
<svg class="a" style="left:500px;top:983px" width="14" height="9" viewBox="0 0 14 9"><path d="M4 0.500h9.500v8H4L0.500 4.500z" fill="#d8d8d8"/><circle cx="4.500" cy="4.500" r="1.400" fill="#2b2b2b"/></svg>
<div class="t" style="left:521px;top:979px;font-size:13px;letter-spacing:-0.45px;letter-spacing:-0.83px">1 selected</div>
<div class="btn" style="left:751px;top:978px;width:19px;height:19px;background:#2b2b2b;border-color:#222"></div>
<svg class="a" style="left:755px;top:982px" width="11" height="11" viewBox="0 0 11 11"><rect x="0.600" y="0.600" width="9.800" height="9.800" fill="none" stroke="#ddd" stroke-width="1.200"/><rect x="4" y="4" width="3" height="3" fill="#ddd"/></svg>
<div class="a" style="left:773px;top:978px;width:183px;height:19px;background:#555;border-radius:3px"></div>
<div class="a" style="left:774px;top:979px;width:86px;height:17px;background:#2b2b2b;border-radius:2px"></div>
<svg class="a" style="left:780px;top:982px" width="13" height="11" viewBox="0 0 13 11"><path d="M1 1.500h11M3 5.500h8M0 9.500h10" stroke="#2fd673" stroke-width="1.700"/></svg>
<div class="t" style="left:796px;top:980px;font-size:13px;letter-spacing:-0.45px;letter-spacing:-0.56px">Time Editor</div>
<svg class="a" style="left:867px;top:981px" width="13" height="13" viewBox="0 0 13 13"><path d="M2 0v13M0 11h13M2 11 12 3" fill="none" stroke="#ddd" stroke-width="1"/></svg>
<div class="t" style="left:885px;top:980px;font-size:13px;letter-spacing:-0.45px;letter-spacing:-0.59px">Graph Editor</div>
<!-- TIMELINE -->
<div class="a" style="left:957px;top:630px;width:8px;height:346px;background:#1c1c1c"></div>
<div class="a" style="left:957px;top:654px;width:6px;height:322px;background:#282828"></div>
<div class="a" style="left:961px;top:807px;width:2px;height:2px;background:#999;box-shadow:0 3px 0 #999,0 6px 0 #999,0 9px 0 #999,0 12px 0 #999,0 15px 0 #999"></div>
<div class="a" style="left:965px;top:630px;width:949px;height:24px;background:#262626"></div>
<div class="a" style="left:963px;top:654px;width:951px;height:308px;background:#1c1c1c"></div>
<div class="a" style="left:987px;top:654px;width:905px;height:308px;background:#282828"></div>
<div class="a" style="left:987px;top:654px;width:905px;height:16px;background:#444"></div>
<svg class="a" style="left:965px;top:630px" width="949" height="24" viewBox="0 0 949 24"><path d="M22.0 16v8M32.9 20v4M43.8 20v4M54.6 20v4M65.5 20v4M76.4 16v8M87.3 20v4M98.2 20v4M109.0 20v4M119.9 20v4M130.8 16v8M141.7 20v4M152.6 20v4M163.4 20v4M174.3 20v4M185.2 16v8M196.1 20v4M207.0 20v4M217.8 20v4M228.7 20v4M239.6 16v8M250.5 20v4M261.4 20v4M272.2 20v4M283.1 20v4M294.0 16v8M304.9 20v4M315.8 20v4M326.6 20v4M337.5 20v4M348.4 16v8M359.3 20v4M370.2 20v4M381.0 20v4M391.9 20v4M402.8 16v8M413.7 20v4M424.6 20v4M435.4 20v4M446.3 20v4M457.2 16v8M468.1 20v4M479.0 20v4M489.8 20v4M500.7 20v4M511.6 16v8M522.5 20v4M533.4 20v4M544.2 20v4M555.1 20v4M566.0 16v8M576.9 20v4M587.8 20v4M598.6 20v4M609.5 20v4M620.4 16v8M631.3 20v4M642.2 20v4M653.0 20v4M663.9 20v4M674.8 16v8M685.7 20v4M696.6 20v4M707.4 20v4M718.3 20v4M729.2 16v8M740.1 20v4M751.0 20v4M761.8 20v4M772.7 20v4M783.6 16v8M794.5 20v4M805.4 20v4M816.2 20v4M827.1 20v4M838.0 16v8M848.9 20v4M859.8 20v4M870.6 20v4M881.5 20v4M892.4 16v8M903.3 20v4M914.2 20v4M925.0 20v4" stroke="#bdbdbd" stroke-width="1"/>
<text x="20.5" y="13" text-anchor="middle" font-family="Liberation Sans, sans-serif" font-size="13" letter-spacing="-0.500" fill="#dcdcdc">0</text>
<text x="74.9" y="13" text-anchor="middle" font-family="Liberation Sans, sans-serif" font-size="13" letter-spacing="-0.500" fill="#dcdcdc">15</text>
<text x="129.3" y="13" text-anchor="middle" font-family="Liberation Sans, sans-serif" font-size="13" letter-spacing="-0.500" fill="#dcdcdc">30</text>
<text x="183.7" y="13" text-anchor="middle" font-family="Liberation Sans, sans-serif" font-size="13" letter-spacing="-0.500" fill="#dcdcdc">45</text>
<text x="238.1" y="13" text-anchor="middle" font-family="Liberation Sans, sans-serif" font-size="13" letter-spacing="-0.500" fill="#dcdcdc">60</text>
<text x="292.5" y="13" text-anchor="middle" font-family="Liberation Sans, sans-serif" font-size="13" letter-spacing="-0.500" fill="#dcdcdc">75</text>
<text x="346.9" y="13" text-anchor="middle" font-family="Liberation Sans, sans-serif" font-size="13" letter-spacing="-0.500" fill="#dcdcdc">90</text>
<text x="401.3" y="13" text-anchor="middle" font-family="Liberation Sans, sans-serif" font-size="13" letter-spacing="-0.500" fill="#dcdcdc">105</text>
<text x="455.7" y="13" text-anchor="middle" font-family="Liberation Sans, sans-serif" font-size="13" letter-spacing="-0.500" fill="#dcdcdc">120</text>
<text x="510.1" y="13" text-anchor="middle" font-family="Liberation Sans, sans-serif" font-size="13" letter-spacing="-0.500" fill="#dcdcdc">135</text>
<text x="564.5" y="13" text-anchor="middle" font-family="Liberation Sans, sans-serif" font-size="13" letter-spacing="-0.500" fill="#dcdcdc">150</text>
<text x="618.9" y="13" text-anchor="middle" font-family="Liberation Sans, sans-serif" font-size="13" letter-spacing="-0.500" fill="#dcdcdc">165</text>
<text x="673.3" y="13" text-anchor="middle" font-family="Liberation Sans, sans-serif" font-size="13" letter-spacing="-0.500" fill="#dcdcdc">180</text>
<text x="727.7" y="13" text-anchor="middle" font-family="Liberation Sans, sans-serif" font-size="13" letter-spacing="-0.500" fill="#dcdcdc">195</text>
<text x="782.1" y="13" text-anchor="middle" font-family="Liberation Sans, sans-serif" font-size="13" letter-spacing="-0.500" fill="#dcdcdc">210</text>
<text x="836.5" y="13" text-anchor="middle" font-family="Liberation Sans, sans-serif" font-size="13" letter-spacing="-0.500" fill="#dcdcdc">225</text>
<text x="890.9" y="13" text-anchor="middle" font-family="Liberation Sans, sans-serif" font-size="13" letter-spacing="-0.500" fill="#dcdcdc">240</text>
</svg>
<div class="a" style="left:1893px;top:645px;width:21px;height:9px;background:rgba(38,38,38,.65)"></div>
<div class="a" style="left:982px;top:653px;width:5px;height:18px;background:#6cc5a8;border-radius:1px"></div>
<div class="a" style="left:1892px;top:653px;width:5px;height:18px;background:#6cc5a8;border-radius:1px"></div>
<div class="a" style="left:987px;top:674px;width:905px;height:18px;background:repeating-linear-gradient(135deg,#78e4a4 0 5px,#87f9b5 5px 6px,#78e4a4 6px 11.500px,#6dd89a 11.500px 12.500px,#62cc90 12.500px 18px,#6dd89a 18px 19px,#62cc90 19px 24px,#87f9b5 24px 25.100px)"></div>
<div class="t" style="left:995px;top:674px;color:#1e2a1e;font-size:13px;letter-spacing:-0.45px;letter-spacing:-0.40px">Color Array</div>
<div class="a" style="left:987px;top:696px;width:905px;height:18px;background:repeating-linear-gradient(135deg,#d0f07e 0 5px,#e4ff8d 5px 6px,#d0f07e 6px 11.500px,#c4e676 11.500px 12.500px,#b8dc6e 12.500px 18px,#c4e676 18px 19px,#b8dc6e 19px 24px,#e4ff8d 24px 25.100px)"></div>
<div class="t" style="left:995px;top:696px;color:#1e2a1e;font-size:13px;letter-spacing:-0.45px;letter-spacing:-0.75px">Random [Index]</div>
<div class="a" style="left:987px;top:718px;width:905px;height:18px;background-color:#ecf9a6;background-image:repeating-linear-gradient(135deg,rgba(255,255,255,0) 0 12.500px,rgba(150,200,70,.25) 12.500px 25.100px),linear-gradient(90deg,#ecf9a6 50%,transparent 50%),linear-gradient(#a8d05c 50%,#ecf9a6 50%);background-size:auto,4px 4px,4px 4px;border:1px solid #fbfdf0"></div>
<div class="t" style="left:995px;top:718px;color:#1e2a1e;font-size:13px;letter-spacing:-0.45px;letter-spacing:-0.51px">Oscillator [Position.Z] Cosine</div>
<div class="a" style="left:987px;top:740px;width:905px;height:18px;background:repeating-linear-gradient(135deg,#d0f07e 0 5px,#e4ff8d 5px 6px,#d0f07e 6px 11.500px,#c4e676 11.500px 12.500px,#b8dc6e 12.500px 18px,#c4e676 18px 19px,#b8dc6e 19px 24px,#e4ff8d 24px 25.100px)"></div>
<div class="t" style="left:995px;top:740px;color:#1e2a1e;font-size:13px;letter-spacing:-0.45px;letter-spacing:-0.54px">Oscillator [Position.X] Sine</div>
<div class="a" style="left:987px;top:762px;width:905px;height:18px;background:#ffe67e;border-radius:3px"></div>
<div class="t" style="left:995px;top:762px;color:#1e2a1e;font-size:13px;letter-spacing:-0.45px;letter-spacing:-0.96px">Ellipse Shape</div>
<div class="a" style="left:1265.1px;top:652px;width:1px;height:310px;background:#5fb096"></div>
<svg class="a" style="left:1257.6px;top:643px" width="16" height="11" viewBox="0 0 16 11"><path d="M0.500 0.500h15L8 10.500z" fill="#6cc5a8"/></svg>
<div class="a" style="left:965px;top:962px;width:949px;height:14px;background:#282828"></div>
<div class="a" style="left:966px;top:964px;width:946px;height:10px;background:#4d4d4d;border-radius:5px"></div>
<div class="pn" style="left:965px;top:977px;width:949px;height:21px"></div>
<div class="btn" style="left:969px;top:978px;width:19px;height:19px;background:#2b2b2b;border-color:#222"></div>
<svg class="a" style="left:971px;top:981px" width="15" height="14" viewBox="0 0 15 14"><path d="M0 1.500h14M0 6h14" stroke="#ddd" stroke-width="1.800"/><path d="M0 10.500h9" stroke="#ddd" stroke-width="1.600" stroke-dasharray="2 1.500"/><path d="M11 14l3-3v3z" fill="#3ddc84"/></svg>
<div class="inp" style="left:990px;top:979px;width:150px;height:17px;background:#2b2b2b"></div>
<div class="t" style="left:992px;top:980px;font-size:13px;letter-spacing:-0.45px;letter-spacing:-0.65px">Default Keyframe Layer</div>
<div class="inp" style="left:1146px;top:979px;width:69px;height:17px;background:#2b2b2b"></div>
<div class="t" style="left:1152px;top:980px;color:#4a4a4a;font-size:13px;letter-spacing:-0.45px;">F</div>
<div class="t" style="left:1164px;top:980px;font-size:13px;letter-spacing:-0.45px;">-</div>
<div class="t" style="left:1222px;top:980px;font-size:13px;letter-spacing:-0.45px;letter-spacing:-0.50px">Align:</div>
<div class="a" style="left:1259px;top:979px;width:17px;height:17px;background:#2b2b2b;border-radius:3px;box-shadow:0 0 0 1px #3a3a3a"><svg style="position:absolute;left:0;top:0" width="17" height="17" viewBox="0 0 17 17"><path d="M3.500 3v11" stroke="#e8e8e8" stroke-width="1.200" fill="none"/><path d="M6 6h6M6 11h8" stroke="#e8e8e8" stroke-width="1.200" fill="none" stroke-dasharray="2.500 1.500"/></svg></div>
<div class="a" style="left:1276px;top:979px;width:17px;height:17px;background:#2b2b2b;border-radius:3px;box-shadow:0 0 0 1px #3a3a3a"><svg style="position:absolute;left:0;top:0" width="17" height="17" viewBox="0 0 17 17"><path d="M8.500 3v11" stroke="#e8e8e8" stroke-width="1.200" fill="none"/><path d="M5 6h7M3 11h11" stroke="#e8e8e8" stroke-width="1.200" fill="none" stroke-dasharray="2.500 1.500"/></svg></div>
<div class="a" style="left:1293px;top:979px;width:17px;height:17px;background:#2b2b2b;border-radius:3px;box-shadow:0 0 0 1px #3a3a3a"><svg style="position:absolute;left:0;top:0" width="17" height="17" viewBox="0 0 17 17"><path d="M13.500 3v11" stroke="#e8e8e8" stroke-width="1.200" fill="none"/><path d="M5 6h6M3 11h8" stroke="#e8e8e8" stroke-width="1.200" fill="none" stroke-dasharray="2.500 1.500"/></svg></div>
<div class="a" style="left:1315px;top:979px;width:17px;height:17px;background:#2b2b2b;border-radius:3px;box-shadow:0 0 0 1px #3a3a3a"><svg style="position:absolute;left:0;top:0" width="17" height="17" viewBox="0 0 17 17"><rect x="3.500" y="4.500" width="10" height="8" stroke="#e8e8e8" stroke-width="1" fill="none" stroke-dasharray="2 1"/><path d="M2.500 3.500h2M12.500 3.500h2M2.500 13.500h2M12.500 13.500h2" stroke="#e8e8e8" stroke-width="2"/></svg></div>
<div class="a" style="left:1337px;top:979px;width:29px;height:17px;background:#2b2b2b;border-radius:3px;box-shadow:0 0 0 1px #3a3a3a"><svg style="position:absolute;left:0;top:0" width="29" height="17" viewBox="0 0 29 17"><path d="M5.500 13.500l-1.500-4.500a4.500 4.500 0 0 1 8-3l2.500 3.500-2.300 1.500-2.400-3.600a1.800 1.800 0 0 0-3.200 1.300l1.400 4z" fill="#e8e8e8"/><path d="M22.500 5v7l5-3.500z" fill="none" stroke="#999" stroke-width=".9"/></svg></div>
<div class="a" style="left:1372px;top:979px;width:30px;height:17px;background:#2b2b2b;border-radius:3px;box-shadow:0 0 0 1px #3a3a3a"><svg style="position:absolute;left:0;top:0" width="30" height="17" viewBox="0 0 30 17"><path d="M3 8.500h2M6.500 6v5M9.500 3v11M12.500 6v5M14 8.500h3" stroke="#e8e8e8" stroke-width="1.200" fill="none"/><path d="M23.500 5v7l5-3.500z" fill="none" stroke="#999" stroke-width=".9"/></svg></div>
<svg class="a" style="left:1743px;top:980px" width="15" height="15" viewBox="0 0 15 15"><circle cx="6" cy="6" r="5" fill="none" stroke="#ddd" stroke-width="1.100"/><path d="M3.500 6h5" stroke="#ddd" stroke-width="1.100"/><path d="M9.800 9.800l3.500 3.500" stroke="#ddd" stroke-width="1.500"/></svg>
<div class="a" style="left:1767px;top:986px;width:115px;height:3px;background:#555;border-radius:2px"></div>
<div class="a" style="left:1762px;top:982px;width:11px;height:11px;border-radius:50%;background:#6cc5a8;border:2px solid #5ab093"></div>
<svg class="a" style="left:1887px;top:980px" width="15" height="15" viewBox="0 0 15 15"><circle cx="6" cy="6" r="5" fill="none" stroke="#ddd" stroke-width="1.100"/><path d="M3.500 6h5M6 3.500v5" stroke="#ddd" stroke-width="1.100"/><path d="M9.800 9.800l3.500 3.500" stroke="#ddd" stroke-width="1.500"/></svg>
<!-- STATUS BAR -->
<div class="a" style="left:494px;top:1003px;width:1420px;height:23px;background:#3d3d3d"></div>
<div class="a" style="left:498px;top:1009px;width:2px;height:2px;background:#8a8a8a;box-shadow:0 4px 0 #8a8a8a,0 8px 0 #8a8a8a"></div>
<div class="btn" style="left:507px;top:1006px;width:18px;height:18px;background:#2b2b2b;border-color:#222"></div>
<svg class="a" style="left:509px;top:1008px" width="15" height="15" viewBox="0 0 15 15"><path d="M0.500 0.500h12v9H6l-3 3v-3H0.500z" fill="#e4e4e4"/><path d="M2.500 3h8M2.500 5h8M2.500 7h8" stroke="#2b2b2b" stroke-width="1"/><path d="M12 15l3-3v3z" fill="#3ddc84"/></svg>
<div class="a" style="left:528px;top:1008px;width:18px;height:14px;background:#e26d6d;border-radius:2px;text-align:center;line-height:14px;color:#5a1a1a;font-size:12px">1</div>
<div class="a" style="left:554px;top:1012px;width:6px;height:6px;border-radius:50%;background:#e26d6d"></div>
<div class="t" style="left:565px;top:1007px;font-size:13px;letter-spacing:-0.45px;letter-spacing:-0.72px">Save reminder: 62 minutes since your last save.</div>
<div class="t" style="left:1482px;top:1007px;font-style:italic;font-size:12px;letter-spacing:-0.3px;letter-spacing:-0.76px">Click to see next message</div>
<div class="a" style="left:1610px;top:1007px;width:80px;height:17px;background:#e3c46a;border-radius:2px"></div>
<div class="t" style="left:1615px;top:1007px;color:#2a2a2a;font-size:13px;letter-spacing:-0.45px;letter-spacing:-1.07px">Feedback</div>
<svg class="a" style="left:1671px;top:1009px" width="13" height="13" viewBox="0 0 13 13"><path d="M1 0.500h7l3 3v9H1z" fill="#f4f4f4"/><path d="M2.500 5h6M2.500 7.500h6M2.500 10h4" stroke="#aaa" stroke-width=".8"/><path d="M6 9l5-6 1.500 1.200-5 6-2 .8z" fill="#e8794a"/></svg>
<div class="a" style="left:1693px;top:1007px;width:109px;height:17px;background:#2fd673;border-radius:2px"></div>
<div class="t" style="left:1698px;top:1007px;color:#14321f;font-size:13px;letter-spacing:-0.45px;letter-spacing:-0.67px">Upgrade to Pro</div>
<svg class="a" style="left:1781px;top:1010px" width="14" height="12" viewBox="0 0 14 12"><path d="M1 5 3 1.500l2.500.8L6.500 8 5 11 2 10.500z" fill="#f2c744"/><path d="M13 5 11 1.500l-2.500.8L7.500 8 9 11l3-.5z" fill="#f2c744"/></svg>
<div class="a" style="left:1805px;top:1007px;width:107px;height:17px;background:#3aa0f0;border-radius:2px"></div>
<div class="t" style="left:1810px;top:1007px;color:#0e2438;font-size:13px;letter-spacing:-0.45px;letter-spacing:-0.77px">Tips and Tricks</div>
<svg class="a" style="left:1891px;top:1009px" width="14" height="13" viewBox="0 0 14 13"><path d="M13 0.500c-4 0-7 2.500-9 6.500l2.500 2.500C10.500 7.500 13 4.500 13 .5z" fill="#e8e8f0"/><path d="M4 7 1.500 7.500 4 5zM6.500 9.500 6 12l2.500-2.500z" fill="#d04a4a"/><circle cx="9.500" cy="4" r="1.200" fill="#4a8ad0"/><path d="M2 10l2 1.500-3 1z" fill="#f2a744"/></svg>
</body></html>
